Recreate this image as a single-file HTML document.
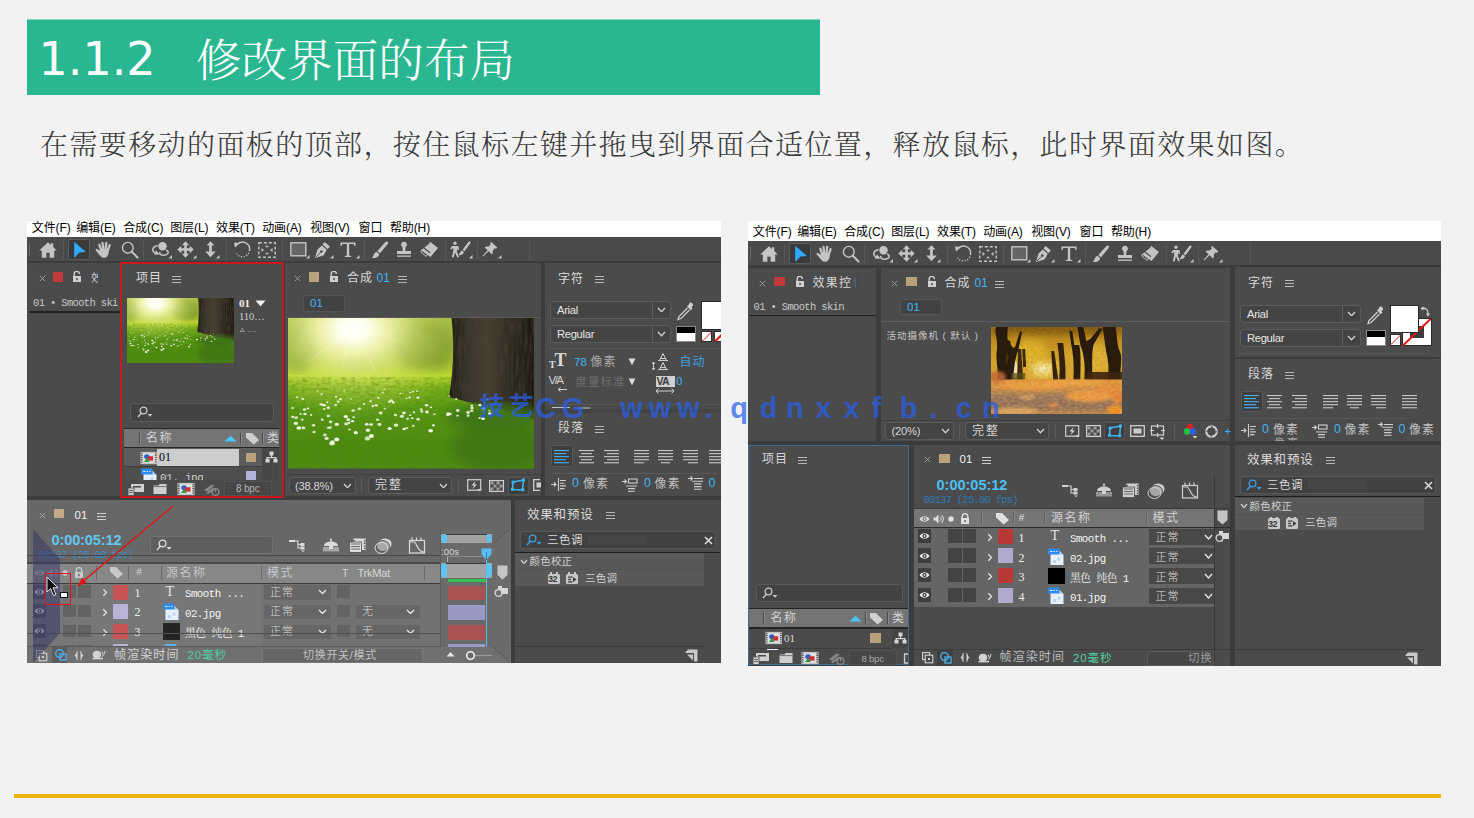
<!DOCTYPE html>
<html lang="zh-CN">
<head>
<meta charset="utf-8">
<title>1.1.2 修改界面的布局</title>
<style>
*{box-sizing:border-box;margin:0;padding:0}
html,body{width:1474px;height:818px;overflow:hidden;background:#f2f2f2}
body{position:relative;font-family:"Liberation Sans","Noto Sans CJK SC",sans-serif}
#banner{position:absolute;left:27px;top:20px;width:793px;height:75px;background:#2ab691;box-shadow:0 -1px 0 #8ed4c1}
#title{position:absolute;left:38.5px;top:27px;color:#fff;font-size:46px;line-height:64px;white-space:pre;font-family:"DejaVu Sans","Noto Serif CJK SC",serif}
#title .cn{font-family:"Liberation Serif","Noto Serif CJK SC",serif;font-size:45.6px;font-weight:300;margin-left:-3.5px;position:relative;top:1.5px}
#desc{position:absolute;left:40px;top:124px;color:#3a3a3a;font-weight:300;letter-spacing:1.4px;font-size:28px;line-height:44px;white-space:nowrap;font-family:"Liberation Serif","Noto Serif CJK SC",serif}
#rule{position:absolute;left:14px;top:794px;width:1427px;height:4px;background:#ebb50e}
.ae{position:absolute;background:#3c3c3c;overflow:hidden;font-size:11px;color:#c8c8c8}
.ae div,.ae svg{position:absolute;display:block}
.ae div{overflow:visible}
#L{left:27px;top:221px;width:694px;height:442px}
#R{left:748px;top:221px;width:693px;height:445px}
#wm{position:absolute;left:0;top:390.5px;width:1474px;height:34px;font-weight:bold;color:rgba(40,95,235,.74);font-family:"Liberation Sans","Noto Sans CJK SC",sans-serif}
#wm span{position:absolute;top:0;width:40px;text-align:center;line-height:34px;height:34px}
</style>
</head>
<body>
<div id="banner"></div>
<div id="title">1.1.2   <span class="cn">修改界面的布局</span></div>
<div id="desc">在需要移动的面板的顶部，按住鼠标左键并拖曳到界面合适位置，释放鼠标，此时界面效果如图。</div>
<div id="L" class="ae">
<div style="left:0px;top:0px;width:694px;height:442px;background:#3c3c3c;"></div>
<div style="left:0px;top:0px;width:694px;height:16px;background:#fff;"></div>
<div style="left:4.8px;top:-1.4px;height:16px;line-height:16px;font-size:12px;white-space:pre;color:#000;letter-spacing:-0.100px;">文件(F)</div>
<div style="left:49.2px;top:-1.4px;height:16px;line-height:16px;font-size:12px;white-space:pre;color:#000;letter-spacing:-0.100px;">编辑(E)</div>
<div style="left:96.2px;top:-1.4px;height:16px;line-height:16px;font-size:12px;white-space:pre;color:#000;letter-spacing:-0.100px;">合成(C)</div>
<div style="left:143.2px;top:-1.4px;height:16px;line-height:16px;font-size:12px;white-space:pre;color:#000;letter-spacing:-0.100px;">图层(L)</div>
<div style="left:189px;top:-1.4px;height:16px;line-height:16px;font-size:12px;white-space:pre;color:#000;letter-spacing:-0.100px;">效果(T)</div>
<div style="left:235.2px;top:-1.4px;height:16px;line-height:16px;font-size:12px;white-space:pre;color:#000;letter-spacing:-0.100px;">动画(A)</div>
<div style="left:283.2px;top:-1.4px;height:16px;line-height:16px;font-size:12px;white-space:pre;color:#000;letter-spacing:-0.100px;">视图(V)</div>
<div style="left:331.5px;top:-1.4px;height:16px;line-height:16px;font-size:12px;white-space:pre;color:#000;letter-spacing:-0.100px;">窗口</div>
<div style="left:362.9px;top:-1.4px;height:16px;line-height:16px;font-size:12px;white-space:pre;color:#000;letter-spacing:-0.100px;">帮助(H)</div>
<div style="left:0px;top:16px;width:694px;height:25px;background:#4a4a4a;"></div>
<div style="left:0px;top:40px;width:694px;height:2px;background:#3c3c3c;"></div>
<div style="left:2px;top:22px;width:1px;height:13px;background:#6a6a6a;"></div>
<div style="left:36px;top:19px;width:1px;height:20px;background:#565656;"></div>
<div style="left:116px;top:19px;width:1px;height:20px;background:#565656;"></div>
<div style="left:199px;top:19px;width:1px;height:20px;background:#565656;"></div>
<div style="left:254.5px;top:19px;width:1px;height:20px;background:#565656;"></div>
<div style="left:336.5px;top:19px;width:1px;height:20px;background:#565656;"></div>
<div style="left:417.5px;top:19px;width:1px;height:20px;background:#565656;"></div>
<div style="left:449.5px;top:19px;width:1px;height:20px;background:#565656;"></div>
<div style="left:501.5px;top:19px;width:1px;height:20px;background:#565656;"></div>
<svg style="left:12px;top:21px;" width="18" height="16" viewBox="0 0 18 16"><path d="M9 0.300 L11.800 2.900 V1.200 H14.200 V5.100 L17.800 8.500 H15.200 V15.700 H10.600 V10.800 H7.400 V15.700 H2.800 V8.500 H0.200 Z" fill="#c4c4c4"/></svg>
<div style="left:41px;top:18px;width:22px;height:21px;background:#3a3a3a;border:1px solid #5c5c5c;border-radius:2px;"></div>
<svg style="left:46px;top:20px;" width="14" height="18" viewBox="0 0 14 18"><path d="M1.2 0.8 L13 11 L6.5 11.6 L1.2 17 Z" fill="#31a8ff"/></svg>
<svg style="left:68px;top:20px;" width="18" height="18" viewBox="0 0 18 18"><g stroke="#c4c4c4" stroke-width="2.300" stroke-linecap="round"><path d="M6.200 9 L4.300 3.800 M8.300 8.500 L7.500 1.800 M10.600 8.500 L11.200 1.900 M12.700 9.500 L14.600 4.200"/><path d="M5 12.500 L1.800 9" stroke-width="2.400"/></g><path d="M4.600 8.500 H13.800 C14 13 12.500 16.800 9.200 16.800 C6.500 16.800 5 15 3.300 12 Z" fill="#c4c4c4"/></svg>
<svg style="left:93.5px;top:20px;" width="18" height="18" viewBox="0 0 18 18"><circle cx="6.8" cy="6.8" r="5.4" fill="none" stroke="#c4c4c4" stroke-width="1.4"/><path d="M10.8 10.8 L16.5 16.5" stroke="#c4c4c4" stroke-width="2" stroke-linecap="round"/></svg>
<svg style="left:123.5px;top:20px;" width="22" height="18" viewBox="0 0 22 18"><circle cx="11.5" cy="5.2" r="4.2" fill="#c4c4c4"/><path d="M6.5 4.5 C1 6 0.5 10 4 12" fill="none" stroke="#c4c4c4" stroke-width="1.5"/><path d="M3 13.8 L8.8 13.5 L5 9.6 Z" fill="#c4c4c4"/><path d="M15 9 C18 10 18.5 13.5 13 14.2 C10 14.5 8 13 9 11" fill="none" stroke="#c4c4c4" stroke-width="1.5"/><path d="M21 14 V17.5 H17.5 Z" fill="#c4c4c4"/></svg>
<svg style="left:150px;top:20px;" width="20" height="18" viewBox="0 0 20 18"><path d="M8.500 0.300 L12.200 4.300 H9.800 V7.200 H12.700 V4.800 L16.700 8.500 L12.700 12.200 V9.800 H9.800 V12.700 H12.200 L8.500 16.700 L4.800 12.700 H7.200 V9.800 H4.300 V12.200 L0.300 8.500 L4.300 4.800 V7.200 H7.200 V4.300 H4.800 Z" fill="#c4c4c4"/><path d="M19.500 14 V17.500 H16 Z" fill="#c4c4c4"/></svg>
<svg style="left:177px;top:20px;" width="16" height="18" viewBox="0 0 16 18"><path d="M6.500 0.300 L10.500 4.600 H7.900 V10.400 H11.800 L6.500 16.300 L1.200 10.400 H5.100 V4.600 H2.500 Z" fill="#c4c4c4"/><path d="M15.500 14 V17.500 H12 Z" fill="#c4c4c4"/></svg>
<svg style="left:205px;top:20px;" width="20" height="18" viewBox="0 0 20 18"><path d="M5 3.8 A7 7 0 0 1 17.5 9" fill="none" stroke="#c4c4c4" stroke-width="1.5"/><path d="M17.5 9 A7 7 0 0 1 4.5 12.5" fill="none" stroke="#c4c4c4" stroke-width="1.3" stroke-dasharray="1.2 1.6"/><path d="M2 1.5 L7.5 2 L3 6.8 Z" fill="#c4c4c4"/></svg>
<svg style="left:231px;top:21px;" width="18" height="16" viewBox="0 0 18 16"><rect x="0.8" y="0.8" width="16.4" height="14.4" fill="none" stroke="#c4c4c4" stroke-width="1.4" stroke-dasharray="3 2"/><path d="M3.500 6 L6 8 L3.500 10 Z M14.500 6 L12 8 L14.500 10 Z M7 3.800 L9 5.800 L11 3.800 Z M7 12.200 L9 10.200 L11 12.200 Z" fill="#c4c4c4"/></svg>
<svg style="left:263px;top:21px;" width="20" height="17" viewBox="0 0 20 17"><rect x="0.8" y="0.8" width="15" height="13" fill="#656565" stroke="#c4c4c4" stroke-width="1.4"/><path d="M19.5 13 V16.5 H16 Z" fill="#c4c4c4"/></svg>
<svg style="left:287px;top:20px;" width="20" height="18" viewBox="0 0 20 18"><path d="M10.5 1 L16 5.5 L13.5 8 L8.5 3.5 Z M7.8 4.4 L12.8 8.8 L9.5 14.5 L1 17 L3.5 8.5 Z" fill="#c4c4c4"/><circle cx="7.3" cy="10.6" r="1.3" fill="#4a4a4a"/><path d="M2 16 L6.6 11.3" stroke="#4a4a4a" stroke-width="0.9"/><path d="M19.5 14 V17.5 H16 Z" fill="#c4c4c4"/></svg>
<svg style="left:313px;top:21px;" width="20" height="17" viewBox="0 0 20 17"><path d="M0.5 0.5 H15.5 V4 H14.3 L13.8 2 H9.2 V13.5 L11.2 14 V15 H4.8 V14 L6.8 13.5 V2 H2.2 L1.7 4 H0.5 Z" fill="#c4c4c4"/><path d="M19.5 13 V16.5 H16 Z" fill="#c4c4c4"/></svg>
<svg style="left:344px;top:20px;" width="18" height="18" viewBox="0 0 18 18"><path d="M16.5 0.5 C17.5 1 17.3 2.2 16.5 3.2 L9 12.2 L6.3 10 L14 1.5 C15 0.5 16 0.2 16.5 0.5 Z M5.5 10.8 L8.2 13 C7.8 16 5 17.5 0.8 16.8 C2.8 15.5 2.5 12 5.5 10.8 Z" fill="#c4c4c4"/></svg>
<svg style="left:368px;top:20px;" width="18" height="18" viewBox="0 0 18 18"><path d="M9 0.8 A2.8 2.8 0 0 1 10.6 6 L10.2 10 H16 V13 H2 V10 H7.8 L7.4 6 A2.8 2.8 0 0 1 9 0.8 Z" fill="#c4c4c4"/><rect x="2" y="14.5" width="14" height="1.3" fill="#c4c4c4"/></svg>
<svg style="left:393px;top:20px;" width="19" height="18" viewBox="0 0 19 18"><path d="M10 0.8 L18 7 L10.5 16 L7.6 13.7 L14 6 L9.5 2.5 Z M9.5 2.5 L14 6 L7.6 13.7 L1.5 9 Z" fill="#c4c4c4"/><path d="M4 7 L10 11.8" stroke="#4a4a4a" stroke-width="1.1"/><path d="M1.5 9 L7.6 13.7 L6.2 15.4 L0.8 11 Z" fill="none" stroke="#c4c4c4" stroke-width="1"/></svg>
<svg style="left:423px;top:20px;" width="23" height="18" viewBox="0 0 23 18"><circle cx="5" cy="2.3" r="1.7" fill="#c4c4c4"/><path d="M2 5 H8.5 L9 9 L7.5 9.2 L7.2 6.8 L6.8 10.5 L9 16 L7.3 16.5 L5 11.5 L3.5 16.5 L1.8 16.2 L3.3 10 L3.2 6.8 L1.2 8.5 L0.3 7.4 Z" fill="#c4c4c4"/><path d="M20 0.5 C21 1 20.6 2 20 2.8 L14.5 10.2 L12.6 8.8 L18 1.5 C18.8 0.5 19.5 0.2 20 0.5 Z M12 9.5 L14 11 C13.5 13.5 11.5 14.5 8.5 14 C10 13 9.8 10.5 12 9.5 Z" fill="#c4c4c4"/><path d="M22.5 14 V17.5 H19 Z" fill="#c4c4c4"/></svg>
<svg style="left:455px;top:20px;" width="20" height="18" viewBox="0 0 20 18"><path d="M9 0.8 L15.5 6.8 L13.8 7.8 L12.6 7.2 L10.6 10 C11.2 11.5 10.8 12.6 10 13.4 L6.6 10.2 L1.2 15.4 L0.6 14.8 L5.6 9.2 L2.6 6.4 C3.6 5.4 4.8 5.2 6.2 5.8 L8.8 3.6 L8.2 2.4 Z" fill="#c4c4c4"/><path d="M19.5 14 V17.5 H16 Z" fill="#c4c4c4"/></svg>
<div style="left:0px;top:42px;width:93px;height:233px;background:#4b4b4b;"></div>
<svg style="left:11.5px;top:53.5px;" width="7" height="7" viewBox="0 0 7 7"><path d="M0.8 0.8 L6.2 6.2 M6.2 0.8 L0.8 6.2" stroke="#9a9a9a" stroke-width="1"/></svg>
<div style="left:26px;top:51px;width:10px;height:10px;background:#c23a3a;"></div>
<svg style="left:45px;top:50px;" width="10" height="11" viewBox="0 0 10 11"><path d="M2.2 5 V3 a2.6 2.6 0 0 1 5.2 0" fill="none" stroke="#cfcfcf" stroke-width="1.4"/><rect x="1" y="5" width="8" height="6" fill="#cfcfcf"/><rect x="4.3" y="7" width="1.4" height="2.2" fill="#4b4b4b"/></svg>
<div style="left:64px;top:49.5px;height:15px;line-height:15px;font-size:11px;white-space:pre;color:#d0d0d0;width:7px;overflow:hidden;">效</div>
<div style="left:73px;top:47px;width:1px;height:20px;background:#454545;"></div>
<div style="left:6px;top:74.5px;height:15px;line-height:15px;font-size:10.5px;white-space:pre;color:#c8c8c8;font-family:'Liberation Mono','Noto Serif CJK SC',monospace;letter-spacing:-0.650px;width:86px;overflow:hidden;">01 • Smooth ski</div>
<div style="left:2px;top:90px;width:91px;height:1.5px;background:#232323;"></div>
<div style="left:93px;top:42px;width:2px;height:235px;background:#c8191e;"></div>
<div style="left:255px;top:42px;width:2px;height:235px;background:#c8191e;"></div>
<div style="left:93px;top:40.5px;width:164px;height:2px;background:#c8191e;"></div>
<div style="left:93px;top:275px;width:164px;height:2px;background:#c8191e;"></div>
<div style="left:95px;top:42.5px;width:160px;height:232.5px;background:#4b4b4b;"></div>
<div style="left:109px;top:49px;height:17px;line-height:17px;font-size:12px;white-space:pre;color:#d8d8d8;letter-spacing:1px;">项目</div>
<div style="left:145px;top:54.5px;width:9px;height:1px;background:#b8b8b8;"></div>
<div style="left:145px;top:57.5px;width:9px;height:1px;background:#b8b8b8;"></div>
<div style="left:145px;top:60.5px;width:9px;height:1px;background:#b8b8b8;"></div>
<svg preserveAspectRatio="none" style="left:100px;top:77px;" width="107" height="65" viewBox="0 0 100 61"><defs>
<linearGradient id="gAt" x1="0" y1="0" x2="0" y2="1"><stop offset="0" stop-color="#9cb43c"/><stop offset="0.2" stop-color="#a4ba40"/><stop offset="0.32" stop-color="#b0cc34"/><stop offset="0.38" stop-color="#bcd82c"/><stop offset="0.46" stop-color="#7ab01c"/><stop offset="0.6" stop-color="#589818"/><stop offset="0.85" stop-color="#4a8a14"/><stop offset="1" stop-color="#4c8a16"/></linearGradient>
<radialGradient id="gBt" cx="0.265" cy="0.06" r="0.5" gradientTransform="scale(1 1.2)"><stop offset="0" stop-color="#ffffff"/><stop offset="0.12" stop-color="#fffff0"/><stop offset="0.28" stop-color="#f6f7b4" stop-opacity="0.9"/><stop offset="0.6" stop-color="#dce870" stop-opacity="0.45"/><stop offset="1" stop-color="#c0d850" stop-opacity="0"/></radialGradient>
<linearGradient id="gCt" x1="0" y1="0" x2="1" y2="0"><stop offset="0" stop-color="#1c180e"/><stop offset="0.2" stop-color="#38332a"/><stop offset="0.45" stop-color="#484234"/><stop offset="0.75" stop-color="#2c281c"/><stop offset="1" stop-color="#1c180e"/></linearGradient>
<linearGradient id="gDt" x1="0" y1="0" x2="0" y2="1"><stop offset="0" stop-color="#3c6a14" stop-opacity="0"/><stop offset="0.6" stop-color="#447a16" stop-opacity="0.9"/><stop offset="1" stop-color="#4c8818" stop-opacity="1"/></linearGradient>
<filter id="gFt" x="-5%" y="-5%" width="110%" height="110%"><feGaussianBlur stdDeviation="2.2"/></filter>
<filter id="gGt"><feGaussianBlur stdDeviation="0.25"/></filter>
<filter id="gNt" x="0" y="0" width="100%" height="100%"><feTurbulence type="fractalNoise" baseFrequency="0.5 0.9" numOctaves="2" seed="3"/><feColorMatrix type="matrix" values="0 0 0 0 0.1  0 0 0 0 0.25  0 0 0 0 0  0.9 0.9 0 0 -0.75"/></filter>
<filter id="gTt" x="0" y="0" width="100%" height="100%"><feTurbulence type="fractalNoise" baseFrequency="0.9 0.12" numOctaves="2" seed="5"/><feColorMatrix type="matrix" values="0 0 0 0 0.06  0 0 0 0 0.05  0 0 0 0 0.03  1.2 1.2 0 0 -0.95"/></filter>
<clipPath id="gKt"><path d="M66.500 0 H100 V41 C92 38 80 36 65.500 32 C67.500 20 67.500 10 66.500 0 Z"/></clipPath>
</defs>
<rect width="100" height="61" fill="url(#gAt)"/>
<g filter="url(#gFt)"><ellipse cx="55" cy="11" rx="13" ry="10" fill="#6e8c20" opacity="0.85"/><ellipse cx="4" cy="12" rx="8" ry="10" fill="#6e9024" opacity="0.85"/><ellipse cx="44" cy="6" rx="6" ry="5" fill="#8aa830" opacity="0.5"/><ellipse cx="30" cy="18" rx="10" ry="3" fill="#94ae34" opacity="0.6"/><ellipse cx="60" cy="17" rx="7" ry="4" fill="#6f8e22" opacity="0.6"/></g>
<rect width="100" height="61" fill="url(#gBt)"/>
<g stroke="#fffff0" stroke-width="0.35" opacity="0.3"><path d="M26.500 4 L8 18 M26.500 4 L22 20 M26.500 4 L36 22 M26.500 4 L44 9 M26.500 4 L16 14"/></g>
<rect y="24" width="100" height="37" filter="url(#gNt)" opacity="0.85"/>
<path d="M66.500 0 H100 V41 C92 38 80 36 65.500 32 C67.500 20 67.500 10 66.500 0 Z" fill="url(#gCt)"/>
<rect x="66" y="0" width="34" height="38" filter="url(#gTt)" clip-path="url(#gKt)" opacity="0.9"/>
<g filter="url(#gFt)"><ellipse cx="84" cy="40" rx="20" ry="5" fill="#3f7414" opacity="0.95"/><ellipse cx="86" cy="52" rx="20" ry="10" fill="#3c7212" opacity="0.7"/></g>
<g fill="#f6f8e8" filter="url(#gGt)"><ellipse cx="46.3" cy="39.8" rx="0.83" ry="0.61" opacity="0.87"/><ellipse cx="48.6" cy="40.8" rx="0.57" ry="0.42" opacity="0.88"/><ellipse cx="25.6" cy="32.8" rx="0.37" ry="0.28" opacity="0.95"/><ellipse cx="4.4" cy="44.6" rx="1.00" ry="0.74" opacity="0.99"/><ellipse cx="50.9" cy="43.7" rx="0.62" ry="0.46" opacity="0.75"/><ellipse cx="5.8" cy="41.2" rx="0.58" ry="0.43" opacity="0.81"/><ellipse cx="38.6" cy="30.3" rx="0.41" ry="0.30" opacity="0.96"/><ellipse cx="52.9" cy="41.0" rx="0.70" ry="0.51" opacity="0.92"/><ellipse cx="23.5" cy="39.9" rx="0.86" ry="0.63" opacity="1.00"/><ellipse cx="6.7" cy="37.1" rx="0.69" ry="0.51" opacity="0.85"/><ellipse cx="32.3" cy="48.8" rx="1.13" ry="0.83" opacity="0.75"/><ellipse cx="74.7" cy="35.6" rx="0.55" ry="0.41" opacity="1.00"/><ellipse cx="6.9" cy="38.9" rx="0.69" ry="0.51" opacity="0.94"/><ellipse cx="8.1" cy="36.7" rx="0.53" ry="0.39" opacity="0.99"/><ellipse cx="10.6" cy="46.2" rx="0.71" ry="0.53" opacity="0.78"/><ellipse cx="65.6" cy="31.6" rx="0.37" ry="0.28" opacity="0.89"/><ellipse cx="16.4" cy="39.7" rx="0.75" ry="0.55" opacity="0.78"/><ellipse cx="10.4" cy="43.5" rx="0.73" ry="0.54" opacity="0.80"/><ellipse cx="79.6" cy="36.7" rx="0.69" ry="0.51" opacity="0.83"/><ellipse cx="18.1" cy="50.2" rx="0.88" ry="0.65" opacity="0.91"/><ellipse cx="81.1" cy="32.9" rx="0.41" ry="0.30" opacity="0.81"/><ellipse cx="27.6" cy="46.6" rx="0.74" ry="0.55" opacity="0.77"/><ellipse cx="48.2" cy="32.6" rx="0.41" ry="0.31" opacity="0.90"/><ellipse cx="37.7" cy="38.5" rx="0.79" ry="0.59" opacity="0.87"/><ellipse cx="13.5" cy="35.0" rx="0.67" ry="0.49" opacity="0.95"/><ellipse cx="16.4" cy="36.4" rx="0.66" ry="0.49" opacity="0.99"/><ellipse cx="78.0" cy="35.3" rx="0.67" ry="0.50" opacity="0.90"/><ellipse cx="9.4" cy="39.3" rx="0.48" ry="0.36" opacity="0.99"/><ellipse cx="58.1" cy="36.2" rx="0.49" ry="0.37" opacity="0.96"/><ellipse cx="24.8" cy="42.5" rx="0.60" ry="0.44" opacity="0.93"/><ellipse cx="19.5" cy="31.9" rx="0.48" ry="0.36" opacity="0.96"/><ellipse cx="23.7" cy="42.9" rx="0.92" ry="0.68" opacity="0.80"/><ellipse cx="22.8" cy="29.4" rx="0.39" ry="0.29" opacity="0.77"/><ellipse cx="30.9" cy="34.9" rx="0.56" ry="0.42" opacity="0.78"/><ellipse cx="73.2" cy="38.3" rx="0.80" ry="0.59" opacity="0.91"/><ellipse cx="48.3" cy="44.6" rx="0.63" ry="0.46" opacity="0.76"/><ellipse cx="52.5" cy="29.7" rx="0.41" ry="0.30" opacity="0.93"/><ellipse cx="81.9" cy="37.6" rx="0.46" ry="0.34" opacity="0.89"/><ellipse cx="58.0" cy="45.7" rx="0.95" ry="0.70" opacity="0.98"/><ellipse cx="56.5" cy="38.1" rx="0.76" ry="0.56" opacity="0.97"/><ellipse cx="65.0" cy="39.2" rx="0.78" ry="0.58" opacity="0.89"/><ellipse cx="32.0" cy="43.1" rx="0.79" ry="0.58" opacity="0.90"/><ellipse cx="52.8" cy="32.3" rx="0.61" ry="0.45" opacity="0.97"/><ellipse cx="32.5" cy="45.5" rx="0.92" ry="0.68" opacity="0.90"/><ellipse cx="68.9" cy="39.6" rx="0.51" ry="0.37" opacity="0.94"/><ellipse cx="49.7" cy="30.2" rx="0.42" ry="0.31" opacity="0.81"/><ellipse cx="41.3" cy="44.8" rx="0.84" ry="0.62" opacity="0.98"/><ellipse cx="1.9" cy="36.5" rx="0.52" ry="0.38" opacity="0.92"/><ellipse cx="14.7" cy="35.4" rx="0.68" ry="0.50" opacity="0.91"/><ellipse cx="73.2" cy="39.6" rx="0.60" ry="0.44" opacity="0.92"/><ellipse cx="35.9" cy="35.4" rx="0.65" ry="0.48" opacity="0.98"/><ellipse cx="41.2" cy="33.9" rx="0.61" ry="0.45" opacity="0.96"/><ellipse cx="14.7" cy="36.9" rx="0.57" ry="0.42" opacity="0.82"/><ellipse cx="34.5" cy="35.7" rx="0.60" ry="0.44" opacity="0.87"/><ellipse cx="69.0" cy="37.5" rx="0.77" ry="0.57" opacity="0.86"/><ellipse cx="3.6" cy="32.1" rx="0.57" ry="0.42" opacity="0.76"/><ellipse cx="47.2" cy="45.0" rx="0.71" ry="0.53" opacity="0.95"/><ellipse cx="12.0" cy="29.6" rx="0.40" ry="0.29" opacity="0.76"/><ellipse cx="37.2" cy="43.2" rx="0.81" ry="0.60" opacity="0.91"/><ellipse cx="17.1" cy="44.4" rx="0.77" ry="0.57" opacity="0.79"/><ellipse cx="39.2" cy="28.9" rx="0.44" ry="0.32" opacity="0.79"/><ellipse cx="29.0" cy="36.8" rx="0.65" ry="0.48" opacity="0.88"/><ellipse cx="65.1" cy="38.8" rx="0.79" ry="0.58" opacity="0.77"/><ellipse cx="47.1" cy="38.5" rx="0.77" ry="0.57" opacity="0.95"/><ellipse cx="59.1" cy="43.5" rx="0.64" ry="0.47" opacity="0.97"/><ellipse cx="74.7" cy="37.6" rx="0.73" ry="0.54" opacity="0.84"/><ellipse cx="36.7" cy="32.4" rx="0.49" ry="0.36" opacity="0.94"/><ellipse cx="3.3" cy="40.4" rx="0.80" ry="0.59" opacity="0.77"/><ellipse cx="15.0" cy="47.4" rx="0.78" ry="0.58" opacity="0.79"/><ellipse cx="42.8" cy="34.2" rx="0.59" ry="0.44" opacity="0.96"/><ellipse cx="77.9" cy="40.5" rx="0.52" ry="0.39" opacity="0.81"/><ellipse cx="24.5" cy="41.2" rx="0.79" ry="0.58" opacity="0.91"/><ellipse cx="26.2" cy="41.8" rx="0.67" ry="0.49" opacity="0.96"/><ellipse cx="17.9" cy="50.8" rx="1.13" ry="0.84" opacity="0.88"/><ellipse cx="17.3" cy="42.1" rx="0.74" ry="0.55" opacity="0.88"/><ellipse cx="3.2" cy="42.7" rx="0.94" ry="0.69" opacity="0.88"/><ellipse cx="65.9" cy="38.9" rx="0.67" ry="0.49" opacity="0.87"/><ellipse cx="6.3" cy="44.6" rx="0.80" ry="0.59" opacity="0.85"/><ellipse cx="39.3" cy="36.7" rx="0.46" ry="0.34" opacity="0.86"/><ellipse cx="26.7" cy="40.2" rx="0.56" ry="0.41" opacity="0.90"/><ellipse cx="19.4" cy="35.3" rx="0.61" ry="0.45" opacity="0.83"/><ellipse cx="51.2" cy="38.2" rx="0.49" ry="0.36" opacity="0.93"/><ellipse cx="42.3" cy="33.6" rx="0.44" ry="0.32" opacity="0.80"/><ellipse cx="36.4" cy="41.2" rx="0.65" ry="0.48" opacity="0.85"/><ellipse cx="13.9" cy="41.2" rx="0.58" ry="0.43" opacity="0.91"/><ellipse cx="43.9" cy="43.4" rx="0.91" ry="0.67" opacity="0.90"/><ellipse cx="19.8" cy="49.2" rx="1.03" ry="0.76" opacity="0.98"/><ellipse cx="26.5" cy="37.5" rx="0.75" ry="0.56" opacity="0.80"/><ellipse cx="20.4" cy="33.9" rx="0.58" ry="0.43" opacity="0.81"/><ellipse cx="68.4" cy="32.8" rx="0.47" ry="0.34" opacity="0.95"/><ellipse cx="33.6" cy="33.7" rx="0.56" ry="0.42" opacity="0.75"/><ellipse cx="56.3" cy="35.4" rx="0.68" ry="0.50" opacity="0.99"/><ellipse cx="42.0" cy="33.4" rx="0.57" ry="0.42" opacity="0.88"/><ellipse cx="16.3" cy="44.5" rx="0.59" ry="0.44" opacity="0.78"/><ellipse cx="45.7" cy="30.6" rx="0.44" ry="0.32" opacity="0.89"/><ellipse cx="15.9" cy="34.2" rx="0.44" ry="0.32" opacity="0.96"/><ellipse cx="6.0" cy="32.8" rx="0.61" ry="0.45" opacity="0.87"/><ellipse cx="27.5" cy="46.4" rx="0.82" ry="0.61" opacity="0.88"/><ellipse cx="49.7" cy="39.4" rx="0.48" ry="0.35" opacity="0.93"/><ellipse cx="15.7" cy="48.8" rx="0.87" ry="0.64" opacity="0.85"/><ellipse cx="14.4" cy="35.3" rx="0.55" ry="0.41" opacity="0.75"/><ellipse cx="33.8" cy="43.2" rx="0.80" ry="0.59" opacity="0.88"/><ellipse cx="74.8" cy="36.5" rx="0.66" ry="0.49" opacity="0.94"/><ellipse cx="33.9" cy="47.8" rx="1.07" ry="0.79" opacity="0.92"/><ellipse cx="59.5" cy="39.0" rx="0.49" ry="0.36" opacity="0.84"/><ellipse cx="1.9" cy="40.1" rx="0.62" ry="0.46" opacity="0.91"/><ellipse cx="19.8" cy="43.1" rx="0.94" ry="0.69" opacity="0.92"/><ellipse cx="54.4" cy="37.9" rx="0.64" ry="0.47" opacity="0.88"/><ellipse cx="82.0" cy="38.7" rx="0.69" ry="0.51" opacity="0.93"/><ellipse cx="50.8" cy="29.8" rx="0.47" ry="0.35" opacity="0.81"/><ellipse cx="5.1" cy="38.9" rx="0.53" ry="0.39" opacity="0.84"/><ellipse cx="21.3" cy="32.9" rx="0.60" ry="0.44" opacity="0.89"/><ellipse cx="79.3" cy="40.8" rx="0.72" ry="0.53" opacity="1.00"/><ellipse cx="49.4" cy="32.2" rx="0.54" ry="0.40" opacity="0.76"/><ellipse cx="50.5" cy="40.6" rx="0.51" ry="0.38" opacity="0.99"/><ellipse cx="43.7" cy="39.3" rx="0.69" ry="0.51" opacity="0.84"/><ellipse cx="54.1" cy="37.0" rx="0.62" ry="0.45" opacity="0.82"/><ellipse cx="25.0" cy="45.2" rx="0.58" ry="0.43" opacity="0.81"/><ellipse cx="13.7" cy="30.9" rx="0.50" ry="0.37" opacity="0.85"/></g></svg>
<div style="left:212px;top:74.5px;height:15px;line-height:15px;font-size:11px;white-space:pre;color:#f0f0f0;font-family:'Liberation Serif','Noto Serif CJK SC',serif;font-weight:bold;">01</div>
<svg style="left:228px;top:79px;" width="11" height="7" viewBox="0 0 11 7"><path d="M0.5 0.5 H10.5 L5.5 6.5 Z" fill="#f0f0f0"/></svg>
<div style="left:212px;top:87.5px;height:15px;line-height:15px;font-size:10.5px;white-space:pre;color:#cfcfcf;font-family:'Liberation Serif','Noto Serif CJK SC',serif;">110…</div>
<div style="left:213px;top:101.5px;height:13px;line-height:13px;font-size:9px;white-space:pre;color:#bdbdbd;font-family:'Liberation Serif','Noto Serif CJK SC',serif;">▵ …</div>
<div style="left:102.5px;top:181.5px;width:144px;height:19px;background:#434343;border:1px solid #595959;border-radius:3px;"></div>
<svg style="left:110px;top:185px;" width="16" height="12" viewBox="0 0 16 12"><circle cx="6.5" cy="4.5" r="3.4" fill="none" stroke="#c8c8c8" stroke-width="1.3"/><path d="M4.3 7.3 L1 11" stroke="#c8c8c8" stroke-width="1.4"/><path d="M10.5 8 H15.5 L13 10.8 Z" fill="#c8c8c8"/></svg>
<div style="left:97px;top:206.5px;width:155px;height:1.5px;background:#242424;"></div>
<div style="left:97px;top:208px;width:155px;height:18px;background:#747474;"></div>
<div style="left:112px;top:212px;width:1px;height:11px;background:#4a4a4a;"></div>
<div style="left:113px;top:212px;width:1px;height:11px;background:#8a8a8a;"></div>
<div style="left:119px;top:209px;height:17px;line-height:17px;font-size:12px;white-space:pre;color:#d2d2d2;letter-spacing:1.5px;">名称</div>
<svg style="left:197px;top:214px;" width="13" height="7" viewBox="0 0 13 7"><path d="M0.300 6.500 L6.500 0.800 L12.700 6.500 Z" fill="#48c4fa"/></svg>
<div style="left:213px;top:212px;width:1px;height:11px;background:#4a4a4a;"></div>
<div style="left:214px;top:212px;width:1px;height:11px;background:#8a8a8a;"></div>
<svg style="left:218px;top:211px;" width="15" height="13" viewBox="0 0 15 13"><path d="M1 1 H7 L14 8 L8.6 12.5 L1 5.5 Z" fill="#d0d0d0"/></svg>
<div style="left:235px;top:212px;width:1px;height:11px;background:#4a4a4a;"></div>
<div style="left:236px;top:212px;width:1px;height:11px;background:#8a8a8a;"></div>
<div style="left:240px;top:209px;height:17px;line-height:17px;font-size:12px;white-space:pre;color:#d2d2d2;">类</div>
<div style="left:97px;top:226px;width:155px;height:1px;background:#242424;"></div>
<div style="left:97px;top:227px;width:138px;height:18px;background:#5c5c5c;"></div>
<div style="left:235px;top:227px;width:17px;height:32px;background:#474747;"></div>
<svg preserveAspectRatio="none" style="left:113px;top:229.5px;" width="17.5" height="14" viewBox="0 0 18 16"><rect x="0.5" y="1" width="17" height="14" fill="#c4c4c4"/><rect x="3" y="2.5" width="12" height="11" fill="#e2e2e2"/><path d="M1 2.500 H2.500 M1 5 H2.500 M1 7.500 H2.500 M1 10 H2.500 M1 12.500 H2.500 M15.500 2.500 H17 M15.500 5 H17 M15.500 7.500 H17 M15.500 10 H17 M15.500 12.500 H17" stroke="#555" stroke-width="1.200"/><circle cx="7" cy="6.500" r="2.800" fill="#2a62c8"/><rect x="8" y="6" width="5.500" height="5" fill="#d03030"/><path d="M4 12.500 L7 8 L10 12.500 Z" fill="#2a9a3a"/></svg>
<div style="left:130px;top:227.5px;width:82px;height:17.5px;background:#cdcdcd;"></div>
<div style="left:132px;top:228px;height:17px;line-height:17px;font-size:12px;white-space:pre;color:#000;font-family:'Liberation Serif','Noto Serif CJK SC',serif;">01</div>
<div style="left:219px;top:231.5px;width:10px;height:9.5px;background:#b8a27c;"></div>
<svg style="left:238px;top:230px;" width="13" height="12" viewBox="0 0 13 12"><path d="M4.5 0.5 H8.5 V4.5 H7 V6 H11.5 V8 H12.5 V11.5 H8.5 V8 H10 V7.2 H3 V8 H4.500 V11.5 H0.5 V8 H1.5 V6 H6 V4.500 H4.500 Z" fill="#d6d6d6"/></svg>
<div style="left:97px;top:245px;width:138px;height:1px;background:#3f3f3f;"></div>
<div style="left:97px;top:246px;width:138px;height:13px;background:#4e4e4e;"></div>
<svg style="left:114px;top:247px;" width="17" height="12" viewBox="0 0 17 12"><path d="M2.500 2.500 H11 L15.500 7 V17.500 H2.500 Z" fill="#e6f1fb"/><path d="M11 2.500 L15.500 7 H11 Z" fill="#b4cfe8"/><rect x="0" y="0.500" width="11.500" height="6" rx="1.200" fill="#2d8ceb"/><path d="M2 3.500 H4.500 M5.500 3.500 H7 M8 3.500 H9.500" stroke="#cfe6ff" stroke-width="1.100"/><path d="M5 12 H8 V15 H5 Z M9.500 9.500 H12.500 V12.500 H9.500 Z" fill="#bcd8f2"/></svg>
<div style="left:133px;top:249.5px;height:15px;line-height:15px;font-size:11px;white-space:pre;color:#cfcfcf;font-family:'Liberation Mono','Noto Serif CJK SC',monospace;letter-spacing:-0.4px;height:9px;overflow:hidden;line-height:15px;">01. jpg</div>
<div style="left:219px;top:250px;width:10px;height:9px;background:#b4b2d8;"></div>
<div style="left:95px;top:259px;width:160px;height:16px;background:#4b4b4b;"></div>
<svg style="left:100px;top:262px;" width="18" height="13" viewBox="0 0 18 13"><rect x="4" y="1" width="13" height="8" fill="#cfcfcf"/><rect x="6" y="3" width="8" height="1.5" fill="#4b4b4b"/><rect x="1" y="5" width="6" height="7.5" fill="#cfcfcf" stroke="#4b4b4b" stroke-width="0.8"/><path d="M2 7.5 H6 M2 9.5 H6" stroke="#4b4b4b" stroke-width="0.8"/></svg>
<svg style="left:126px;top:262px;" width="15" height="12" viewBox="0 0 15 12"><path d="M0.5 2.500 H5.5 L6.5 1 H13.500 V11 H0.500 Z" fill="#cfcfcf"/><path d="M0.5 3.6 H13.5" stroke="#4b4b4b" stroke-width="0.7"/></svg>
<svg preserveAspectRatio="none" style="left:150px;top:261px;" width="18" height="14" viewBox="0 0 18 16"><rect x="0.5" y="1" width="17" height="14" fill="#c4c4c4"/><rect x="3" y="2.5" width="12" height="11" fill="#e2e2e2"/><path d="M1 2.500 H2.500 M1 5 H2.500 M1 7.500 H2.500 M1 10 H2.500 M1 12.500 H2.500 M15.500 2.500 H17 M15.500 5 H17 M15.500 7.500 H17 M15.500 10 H17 M15.500 12.500 H17" stroke="#555" stroke-width="1.200"/><circle cx="7" cy="6.500" r="2.800" fill="#2a62c8"/><rect x="8" y="6" width="5.500" height="5" fill="#d03030"/><path d="M4 12.500 L7 8 L10 12.500 Z" fill="#2a9a3a"/></svg>
<svg style="left:176px;top:262px;" width="18" height="14" viewBox="0 0 18 14"><path d="M1 7 L9 1.500 L11.500 2.500 L4 8.500 Z M3 10 L10.500 4.500 L11.500 7 L5 11 Z" fill="#8a8a8a"/><circle cx="12.5" cy="9" r="3.300" fill="none" stroke="#8a8a8a" stroke-width="1.3"/><rect x="11.900" y="5" width="1.3" height="4" fill="#8a8a8a"/></svg>
<div style="left:197px;top:260px;width:48px;height:15px;background:#464646;border:1px solid #525252;"></div>
<div style="left:209px;top:261px;height:14px;line-height:14px;font-size:10px;white-space:pre;color:#b4b4b4;letter-spacing:-0.2px;">8 bpc</div>
<div style="left:258px;top:42px;width:255.5px;height:233px;background:#4b4b4b;"></div>
<svg style="left:266.5px;top:54px;" width="7" height="7" viewBox="0 0 7 7"><path d="M0.8 0.8 L6.2 6.2 M6.2 0.8 L0.8 6.2" stroke="#9a9a9a" stroke-width="1"/></svg>
<div style="left:282px;top:51px;width:10px;height:10px;background:#b8a27c;"></div>
<svg style="left:302px;top:50px;" width="10" height="11" viewBox="0 0 10 11"><path d="M2.2 5 V3 a2.6 2.6 0 0 1 5.2 0" fill="none" stroke="#cfcfcf" stroke-width="1.4"/><rect x="1" y="5" width="8" height="6" fill="#cfcfcf"/><rect x="4.3" y="7" width="1.4" height="2.2" fill="#4b4b4b"/></svg>
<div style="left:320px;top:49px;height:17px;line-height:17px;font-size:12px;white-space:pre;color:#d8d8d8;letter-spacing:1px;">合成</div>
<div style="left:349.5px;top:49px;height:17px;line-height:17px;font-size:12px;white-space:pre;color:#3db4f5;">01</div>
<div style="left:371px;top:54.5px;width:9px;height:1px;background:#b8b8b8;"></div>
<div style="left:371px;top:57.5px;width:9px;height:1px;background:#b8b8b8;"></div>
<div style="left:371px;top:60.5px;width:9px;height:1px;background:#b8b8b8;"></div>
<div style="left:276px;top:74px;width:41.5px;height:16.5px;background:#424242;border:1px solid #555;border-radius:2px;"></div>
<div style="left:283px;top:74px;height:16px;line-height:16px;font-size:11.5px;white-space:pre;color:#3db4f5;">01</div>
<div style="left:258px;top:96px;width:255.5px;height:1px;background:#5a5a5a;"></div>
<svg preserveAspectRatio="none" style="left:261px;top:97px;" width="246" height="150.5" viewBox="0 0 100 61"><defs>
<linearGradient id="gAm" x1="0" y1="0" x2="0" y2="1"><stop offset="0" stop-color="#9cb43c"/><stop offset="0.2" stop-color="#a4ba40"/><stop offset="0.32" stop-color="#b0cc34"/><stop offset="0.38" stop-color="#bcd82c"/><stop offset="0.46" stop-color="#7ab01c"/><stop offset="0.6" stop-color="#589818"/><stop offset="0.85" stop-color="#4a8a14"/><stop offset="1" stop-color="#4c8a16"/></linearGradient>
<radialGradient id="gBm" cx="0.265" cy="0.06" r="0.5" gradientTransform="scale(1 1.2)"><stop offset="0" stop-color="#ffffff"/><stop offset="0.12" stop-color="#fffff0"/><stop offset="0.28" stop-color="#f6f7b4" stop-opacity="0.9"/><stop offset="0.6" stop-color="#dce870" stop-opacity="0.45"/><stop offset="1" stop-color="#c0d850" stop-opacity="0"/></radialGradient>
<linearGradient id="gCm" x1="0" y1="0" x2="1" y2="0"><stop offset="0" stop-color="#1c180e"/><stop offset="0.2" stop-color="#38332a"/><stop offset="0.45" stop-color="#484234"/><stop offset="0.75" stop-color="#2c281c"/><stop offset="1" stop-color="#1c180e"/></linearGradient>
<linearGradient id="gDm" x1="0" y1="0" x2="0" y2="1"><stop offset="0" stop-color="#3c6a14" stop-opacity="0"/><stop offset="0.6" stop-color="#447a16" stop-opacity="0.9"/><stop offset="1" stop-color="#4c8818" stop-opacity="1"/></linearGradient>
<filter id="gFm" x="-5%" y="-5%" width="110%" height="110%"><feGaussianBlur stdDeviation="2.2"/></filter>
<filter id="gGm"><feGaussianBlur stdDeviation="0.25"/></filter>
<filter id="gNm" x="0" y="0" width="100%" height="100%"><feTurbulence type="fractalNoise" baseFrequency="0.5 0.9" numOctaves="2" seed="3"/><feColorMatrix type="matrix" values="0 0 0 0 0.1  0 0 0 0 0.25  0 0 0 0 0  0.9 0.9 0 0 -0.75"/></filter>
<filter id="gTm" x="0" y="0" width="100%" height="100%"><feTurbulence type="fractalNoise" baseFrequency="0.9 0.12" numOctaves="2" seed="5"/><feColorMatrix type="matrix" values="0 0 0 0 0.06  0 0 0 0 0.05  0 0 0 0 0.03  1.2 1.2 0 0 -0.95"/></filter>
<clipPath id="gKm"><path d="M66.500 0 H100 V41 C92 38 80 36 65.500 32 C67.500 20 67.500 10 66.500 0 Z"/></clipPath>
</defs>
<rect width="100" height="61" fill="url(#gAm)"/>
<g filter="url(#gFm)"><ellipse cx="55" cy="11" rx="13" ry="10" fill="#6e8c20" opacity="0.85"/><ellipse cx="4" cy="12" rx="8" ry="10" fill="#6e9024" opacity="0.85"/><ellipse cx="44" cy="6" rx="6" ry="5" fill="#8aa830" opacity="0.5"/><ellipse cx="30" cy="18" rx="10" ry="3" fill="#94ae34" opacity="0.6"/><ellipse cx="60" cy="17" rx="7" ry="4" fill="#6f8e22" opacity="0.6"/></g>
<rect width="100" height="61" fill="url(#gBm)"/>
<g stroke="#fffff0" stroke-width="0.35" opacity="0.3"><path d="M26.500 4 L8 18 M26.500 4 L22 20 M26.500 4 L36 22 M26.500 4 L44 9 M26.500 4 L16 14"/></g>
<rect y="24" width="100" height="37" filter="url(#gNm)" opacity="0.85"/>
<path d="M66.500 0 H100 V41 C92 38 80 36 65.500 32 C67.500 20 67.500 10 66.500 0 Z" fill="url(#gCm)"/>
<rect x="66" y="0" width="34" height="38" filter="url(#gTm)" clip-path="url(#gKm)" opacity="0.9"/>
<g filter="url(#gFm)"><ellipse cx="84" cy="40" rx="20" ry="5" fill="#3f7414" opacity="0.95"/><ellipse cx="86" cy="52" rx="20" ry="10" fill="#3c7212" opacity="0.7"/></g>
<g fill="#f6f8e8" filter="url(#gGm)"><ellipse cx="46.3" cy="39.8" rx="0.83" ry="0.61" opacity="0.87"/><ellipse cx="48.6" cy="40.8" rx="0.57" ry="0.42" opacity="0.88"/><ellipse cx="25.6" cy="32.8" rx="0.37" ry="0.28" opacity="0.95"/><ellipse cx="4.4" cy="44.6" rx="1.00" ry="0.74" opacity="0.99"/><ellipse cx="50.9" cy="43.7" rx="0.62" ry="0.46" opacity="0.75"/><ellipse cx="5.8" cy="41.2" rx="0.58" ry="0.43" opacity="0.81"/><ellipse cx="38.6" cy="30.3" rx="0.41" ry="0.30" opacity="0.96"/><ellipse cx="52.9" cy="41.0" rx="0.70" ry="0.51" opacity="0.92"/><ellipse cx="23.5" cy="39.9" rx="0.86" ry="0.63" opacity="1.00"/><ellipse cx="6.7" cy="37.1" rx="0.69" ry="0.51" opacity="0.85"/><ellipse cx="32.3" cy="48.8" rx="1.13" ry="0.83" opacity="0.75"/><ellipse cx="74.7" cy="35.6" rx="0.55" ry="0.41" opacity="1.00"/><ellipse cx="6.9" cy="38.9" rx="0.69" ry="0.51" opacity="0.94"/><ellipse cx="8.1" cy="36.7" rx="0.53" ry="0.39" opacity="0.99"/><ellipse cx="10.6" cy="46.2" rx="0.71" ry="0.53" opacity="0.78"/><ellipse cx="65.6" cy="31.6" rx="0.37" ry="0.28" opacity="0.89"/><ellipse cx="16.4" cy="39.7" rx="0.75" ry="0.55" opacity="0.78"/><ellipse cx="10.4" cy="43.5" rx="0.73" ry="0.54" opacity="0.80"/><ellipse cx="79.6" cy="36.7" rx="0.69" ry="0.51" opacity="0.83"/><ellipse cx="18.1" cy="50.2" rx="0.88" ry="0.65" opacity="0.91"/><ellipse cx="81.1" cy="32.9" rx="0.41" ry="0.30" opacity="0.81"/><ellipse cx="27.6" cy="46.6" rx="0.74" ry="0.55" opacity="0.77"/><ellipse cx="48.2" cy="32.6" rx="0.41" ry="0.31" opacity="0.90"/><ellipse cx="37.7" cy="38.5" rx="0.79" ry="0.59" opacity="0.87"/><ellipse cx="13.5" cy="35.0" rx="0.67" ry="0.49" opacity="0.95"/><ellipse cx="16.4" cy="36.4" rx="0.66" ry="0.49" opacity="0.99"/><ellipse cx="78.0" cy="35.3" rx="0.67" ry="0.50" opacity="0.90"/><ellipse cx="9.4" cy="39.3" rx="0.48" ry="0.36" opacity="0.99"/><ellipse cx="58.1" cy="36.2" rx="0.49" ry="0.37" opacity="0.96"/><ellipse cx="24.8" cy="42.5" rx="0.60" ry="0.44" opacity="0.93"/><ellipse cx="19.5" cy="31.9" rx="0.48" ry="0.36" opacity="0.96"/><ellipse cx="23.7" cy="42.9" rx="0.92" ry="0.68" opacity="0.80"/><ellipse cx="22.8" cy="29.4" rx="0.39" ry="0.29" opacity="0.77"/><ellipse cx="30.9" cy="34.9" rx="0.56" ry="0.42" opacity="0.78"/><ellipse cx="73.2" cy="38.3" rx="0.80" ry="0.59" opacity="0.91"/><ellipse cx="48.3" cy="44.6" rx="0.63" ry="0.46" opacity="0.76"/><ellipse cx="52.5" cy="29.7" rx="0.41" ry="0.30" opacity="0.93"/><ellipse cx="81.9" cy="37.6" rx="0.46" ry="0.34" opacity="0.89"/><ellipse cx="58.0" cy="45.7" rx="0.95" ry="0.70" opacity="0.98"/><ellipse cx="56.5" cy="38.1" rx="0.76" ry="0.56" opacity="0.97"/><ellipse cx="65.0" cy="39.2" rx="0.78" ry="0.58" opacity="0.89"/><ellipse cx="32.0" cy="43.1" rx="0.79" ry="0.58" opacity="0.90"/><ellipse cx="52.8" cy="32.3" rx="0.61" ry="0.45" opacity="0.97"/><ellipse cx="32.5" cy="45.5" rx="0.92" ry="0.68" opacity="0.90"/><ellipse cx="68.9" cy="39.6" rx="0.51" ry="0.37" opacity="0.94"/><ellipse cx="49.7" cy="30.2" rx="0.42" ry="0.31" opacity="0.81"/><ellipse cx="41.3" cy="44.8" rx="0.84" ry="0.62" opacity="0.98"/><ellipse cx="1.9" cy="36.5" rx="0.52" ry="0.38" opacity="0.92"/><ellipse cx="14.7" cy="35.4" rx="0.68" ry="0.50" opacity="0.91"/><ellipse cx="73.2" cy="39.6" rx="0.60" ry="0.44" opacity="0.92"/><ellipse cx="35.9" cy="35.4" rx="0.65" ry="0.48" opacity="0.98"/><ellipse cx="41.2" cy="33.9" rx="0.61" ry="0.45" opacity="0.96"/><ellipse cx="14.7" cy="36.9" rx="0.57" ry="0.42" opacity="0.82"/><ellipse cx="34.5" cy="35.7" rx="0.60" ry="0.44" opacity="0.87"/><ellipse cx="69.0" cy="37.5" rx="0.77" ry="0.57" opacity="0.86"/><ellipse cx="3.6" cy="32.1" rx="0.57" ry="0.42" opacity="0.76"/><ellipse cx="47.2" cy="45.0" rx="0.71" ry="0.53" opacity="0.95"/><ellipse cx="12.0" cy="29.6" rx="0.40" ry="0.29" opacity="0.76"/><ellipse cx="37.2" cy="43.2" rx="0.81" ry="0.60" opacity="0.91"/><ellipse cx="17.1" cy="44.4" rx="0.77" ry="0.57" opacity="0.79"/><ellipse cx="39.2" cy="28.9" rx="0.44" ry="0.32" opacity="0.79"/><ellipse cx="29.0" cy="36.8" rx="0.65" ry="0.48" opacity="0.88"/><ellipse cx="65.1" cy="38.8" rx="0.79" ry="0.58" opacity="0.77"/><ellipse cx="47.1" cy="38.5" rx="0.77" ry="0.57" opacity="0.95"/><ellipse cx="59.1" cy="43.5" rx="0.64" ry="0.47" opacity="0.97"/><ellipse cx="74.7" cy="37.6" rx="0.73" ry="0.54" opacity="0.84"/><ellipse cx="36.7" cy="32.4" rx="0.49" ry="0.36" opacity="0.94"/><ellipse cx="3.3" cy="40.4" rx="0.80" ry="0.59" opacity="0.77"/><ellipse cx="15.0" cy="47.4" rx="0.78" ry="0.58" opacity="0.79"/><ellipse cx="42.8" cy="34.2" rx="0.59" ry="0.44" opacity="0.96"/><ellipse cx="77.9" cy="40.5" rx="0.52" ry="0.39" opacity="0.81"/><ellipse cx="24.5" cy="41.2" rx="0.79" ry="0.58" opacity="0.91"/><ellipse cx="26.2" cy="41.8" rx="0.67" ry="0.49" opacity="0.96"/><ellipse cx="17.9" cy="50.8" rx="1.13" ry="0.84" opacity="0.88"/><ellipse cx="17.3" cy="42.1" rx="0.74" ry="0.55" opacity="0.88"/><ellipse cx="3.2" cy="42.7" rx="0.94" ry="0.69" opacity="0.88"/><ellipse cx="65.9" cy="38.9" rx="0.67" ry="0.49" opacity="0.87"/><ellipse cx="6.3" cy="44.6" rx="0.80" ry="0.59" opacity="0.85"/><ellipse cx="39.3" cy="36.7" rx="0.46" ry="0.34" opacity="0.86"/><ellipse cx="26.7" cy="40.2" rx="0.56" ry="0.41" opacity="0.90"/><ellipse cx="19.4" cy="35.3" rx="0.61" ry="0.45" opacity="0.83"/><ellipse cx="51.2" cy="38.2" rx="0.49" ry="0.36" opacity="0.93"/><ellipse cx="42.3" cy="33.6" rx="0.44" ry="0.32" opacity="0.80"/><ellipse cx="36.4" cy="41.2" rx="0.65" ry="0.48" opacity="0.85"/><ellipse cx="13.9" cy="41.2" rx="0.58" ry="0.43" opacity="0.91"/><ellipse cx="43.9" cy="43.4" rx="0.91" ry="0.67" opacity="0.90"/><ellipse cx="19.8" cy="49.2" rx="1.03" ry="0.76" opacity="0.98"/><ellipse cx="26.5" cy="37.5" rx="0.75" ry="0.56" opacity="0.80"/><ellipse cx="20.4" cy="33.9" rx="0.58" ry="0.43" opacity="0.81"/><ellipse cx="68.4" cy="32.8" rx="0.47" ry="0.34" opacity="0.95"/><ellipse cx="33.6" cy="33.7" rx="0.56" ry="0.42" opacity="0.75"/><ellipse cx="56.3" cy="35.4" rx="0.68" ry="0.50" opacity="0.99"/><ellipse cx="42.0" cy="33.4" rx="0.57" ry="0.42" opacity="0.88"/><ellipse cx="16.3" cy="44.5" rx="0.59" ry="0.44" opacity="0.78"/><ellipse cx="45.7" cy="30.6" rx="0.44" ry="0.32" opacity="0.89"/><ellipse cx="15.9" cy="34.2" rx="0.44" ry="0.32" opacity="0.96"/><ellipse cx="6.0" cy="32.8" rx="0.61" ry="0.45" opacity="0.87"/><ellipse cx="27.5" cy="46.4" rx="0.82" ry="0.61" opacity="0.88"/><ellipse cx="49.7" cy="39.4" rx="0.48" ry="0.35" opacity="0.93"/><ellipse cx="15.7" cy="48.8" rx="0.87" ry="0.64" opacity="0.85"/><ellipse cx="14.4" cy="35.3" rx="0.55" ry="0.41" opacity="0.75"/><ellipse cx="33.8" cy="43.2" rx="0.80" ry="0.59" opacity="0.88"/><ellipse cx="74.8" cy="36.5" rx="0.66" ry="0.49" opacity="0.94"/><ellipse cx="33.9" cy="47.8" rx="1.07" ry="0.79" opacity="0.92"/><ellipse cx="59.5" cy="39.0" rx="0.49" ry="0.36" opacity="0.84"/><ellipse cx="1.9" cy="40.1" rx="0.62" ry="0.46" opacity="0.91"/><ellipse cx="19.8" cy="43.1" rx="0.94" ry="0.69" opacity="0.92"/><ellipse cx="54.4" cy="37.9" rx="0.64" ry="0.47" opacity="0.88"/><ellipse cx="82.0" cy="38.7" rx="0.69" ry="0.51" opacity="0.93"/><ellipse cx="50.8" cy="29.8" rx="0.47" ry="0.35" opacity="0.81"/><ellipse cx="5.1" cy="38.9" rx="0.53" ry="0.39" opacity="0.84"/><ellipse cx="21.3" cy="32.9" rx="0.60" ry="0.44" opacity="0.89"/><ellipse cx="79.3" cy="40.8" rx="0.72" ry="0.53" opacity="1.00"/><ellipse cx="49.4" cy="32.2" rx="0.54" ry="0.40" opacity="0.76"/><ellipse cx="50.5" cy="40.6" rx="0.51" ry="0.38" opacity="0.99"/><ellipse cx="43.7" cy="39.3" rx="0.69" ry="0.51" opacity="0.84"/><ellipse cx="54.1" cy="37.0" rx="0.62" ry="0.45" opacity="0.82"/><ellipse cx="25.0" cy="45.2" rx="0.58" ry="0.43" opacity="0.81"/><ellipse cx="13.7" cy="30.9" rx="0.50" ry="0.37" opacity="0.85"/></g></svg>
<div style="left:258px;top:253px;width:255.5px;height:1px;background:#414141;"></div>
<div style="left:262px;top:255.5px;width:67px;height:17.5px;background:#444444;border:1px solid #5b5b5b;border-radius:3px;"></div>
<div style="left:268px;top:256.55px;height:16px;line-height:16px;font-size:11.2px;white-space:pre;color:#d6d6d6;letter-spacing:-0.200px;">(38.8%)</div>
<svg style="left:316px;top:261.6px;" width="9" height="5.8" viewBox="0 0 9 5.8"><path d="M1 1 L4.5 4.8 L8 1" fill="none" stroke="#d0d0d0" stroke-width="1.3"/></svg>
<div style="left:334px;top:257px;width:1px;height:15px;background:#5c5c5c;"></div>
<div style="left:340.5px;top:255.5px;width:84.5px;height:17.5px;background:#444444;border:1px solid #5b5b5b;border-radius:3px;"></div>
<div style="left:348px;top:256.05px;height:17px;line-height:17px;font-size:12px;white-space:pre;color:#d6d6d6;letter-spacing:2px;">完整</div>
<svg style="left:411.5px;top:261.6px;" width="9" height="5.8" viewBox="0 0 9 5.8"><path d="M1 1 L4.5 4.8 L8 1" fill="none" stroke="#d0d0d0" stroke-width="1.3"/></svg>
<div style="left:430.5px;top:257px;width:1px;height:15px;background:#5c5c5c;"></div>
<svg style="left:440px;top:258px;" width="15" height="13" viewBox="0 0 15 13"><rect x="0.700" y="0.700" width="13" height="10.500" fill="none" stroke="#d0d0d0" stroke-width="1.2"/><path d="M8.500 2 L4.500 6.500 H7 L5.500 10 L10 5.500 H7.500 Z" fill="#d0d0d0"/><path d="M10.500 10 H14.500 L12.500 12.500 Z" fill="#d0d0d0"/></svg>
<svg style="left:461.5px;top:258.5px;" width="15" height="12" viewBox="0 0 15 12"><rect x="0.600" y="0.600" width="13.800" height="10.800" fill="none" stroke="#d0d0d0" stroke-width="1.2"/><rect x="1.5" y="1.5" width="3" height="3" fill="#9a9a9a"/><rect x="1.5" y="7.5" width="3" height="3" fill="#9a9a9a"/><rect x="4.5" y="4.5" width="3" height="3" fill="#9a9a9a"/><rect x="7.5" y="1.5" width="3" height="3" fill="#9a9a9a"/><rect x="7.5" y="7.5" width="3" height="3" fill="#9a9a9a"/><rect x="10.5" y="4.5" width="3" height="3" fill="#9a9a9a"/></svg>
<div style="left:480.5px;top:255.5px;width:21.5px;height:18px;background:#3e3e3e;border:1px solid #565656;border-radius:2px;"></div>
<svg style="left:483px;top:257px;" width="17" height="15" viewBox="0 0 17 15"><path d="M3 4 L13.500 2 L12.500 12 L2.500 11.500 Z" fill="none" stroke="#3db4f5" stroke-width="1.500"/><rect x="1" y="9.800" width="3" height="3" fill="#3db4f5"/><rect x="11.300" y="10.300" width="3" height="3" fill="#3db4f5"/><rect x="12" y="0.500" width="3" height="3" fill="#3db4f5"/><rect x="1.600" y="2.600" width="3" height="3" fill="#3db4f5"/></svg>
<svg style="left:506px;top:258px;" width="8" height="13" viewBox="0 0 8 13"><path d="M7 0.700 H0.700 V11.300 H7" fill="none" stroke="#d0d0d0" stroke-width="1.300"/><rect x="3.500" y="3.500" width="4.500" height="5" fill="#d0d0d0"/></svg>
<div style="left:517.5px;top:42px;width:176.5px;height:146px;background:#4b4b4b;"></div>
<div style="left:531px;top:49.5px;height:17px;line-height:17px;font-size:12px;white-space:pre;color:#d8d8d8;letter-spacing:1px;">字符</div>
<div style="left:568px;top:55px;width:9px;height:1px;background:#b8b8b8;"></div>
<div style="left:568px;top:58px;width:9px;height:1px;background:#b8b8b8;"></div>
<div style="left:568px;top:61px;width:9px;height:1px;background:#b8b8b8;"></div>
<div style="left:523px;top:79.5px;width:121px;height:18px;background:#444444;border:1px solid #5b5b5b;border-radius:3px;"></div>
<div style="left:625px;top:80.5px;width:1px;height:16px;background:#5b5b5b;"></div>
<div style="left:530px;top:80.8px;height:16px;line-height:16px;font-size:11.2px;white-space:pre;color:#e6e6e6;letter-spacing:-0.300px;">Arial</div>
<svg style="left:630px;top:85.6px;" width="9" height="5.8" viewBox="0 0 9 5.8"><path d="M1 1 L4.5 4.8 L8 1" fill="none" stroke="#d0d0d0" stroke-width="1.3"/></svg>
<div style="left:523px;top:103.5px;width:121px;height:18px;background:#444444;border:1px solid #5b5b5b;border-radius:3px;"></div>
<div style="left:625px;top:104.5px;width:1px;height:16px;background:#5b5b5b;"></div>
<div style="left:530px;top:104.8px;height:16px;line-height:16px;font-size:11.2px;white-space:pre;color:#e6e6e6;letter-spacing:-0.300px;">Regular</div>
<svg style="left:630px;top:110.1px;" width="9" height="5.8" viewBox="0 0 9 5.8"><path d="M1 1 L4.5 4.8 L8 1" fill="none" stroke="#d0d0d0" stroke-width="1.3"/></svg>
<svg style="left:649px;top:81px;" width="20" height="20" viewBox="0 0 20 20"><path d="M13.500 1 C15 -0.200 17.500 1.500 17 3.500 L15.500 5.500 L16.500 6.500 L14.800 8.200 L11 4.400 L12.700 2.700 Z" fill="#cfcfcf"/><path d="M11.500 6 L3 14.500 L2 17.500 L5 16.500 L13.500 8" fill="none" stroke="#cfcfcf" stroke-width="1.300"/></svg>
<div style="left:648.5px;top:104.5px;width:20.5px;height:16.5px;background:#fff;border:1px solid #8a8a8a;"></div>
<div style="left:649.5px;top:105.5px;width:18.5px;height:6.5px;background:#000;"></div>
<div style="left:673.5px;top:79.5px;width:21.5px;height:29px;background:#fff;border:1px solid #2a2a2a;"></div>
<div style="left:673.5px;top:109.5px;width:11.5px;height:11.5px;background:#fff;border:1px solid #2a2a2a;"></div>
<svg style="left:673.5px;top:109.5px;" width="11.5" height="11.5" viewBox="0 0 11.5 11.5"><path d="M1 10.5 L10.5 1" stroke="#e01616" stroke-width="1"/></svg>
<div style="left:686.5px;top:109.5px;width:11.5px;height:11.5px;background:#fff;border:1px solid #2a2a2a;"></div>
<svg style="left:686.5px;top:109.5px;" width="11.5" height="11.5" viewBox="0 0 11.5 11.5"><path d="M1 10.5 L10.5 1" stroke="#e01616" stroke-width="2"/></svg>
<div style="left:523px;top:126.5px;width:171px;height:1px;background:#5a5a5a;"></div>
<div style="left:522px;top:136.5px;height:14px;line-height:14px;font-size:10px;white-space:pre;color:#d8d8d8;font-family:'Liberation Serif','Noto Serif CJK SC',serif;font-weight:bold;">T</div>
<div style="left:527.5px;top:127px;height:25px;line-height:25px;font-size:18px;white-space:pre;color:#d8d8d8;font-family:'Liberation Serif','Noto Serif CJK SC',serif;font-weight:bold;">T</div>
<div style="left:547px;top:133px;height:16px;line-height:16px;font-size:11.5px;white-space:pre;color:#3db4f5;">78</div>
<div style="left:563.5px;top:132.5px;height:17px;line-height:17px;font-size:12px;white-space:pre;color:#a8a8a8;letter-spacing:1px;">像素</div>
<svg style="left:601px;top:137px;" width="8" height="8" viewBox="0 0 8 8"><path d="M0.5 0.5 H7.5 L4 7.5 Z" fill="#d8d8d8"/></svg>
<svg style="left:625px;top:132px;" width="18" height="18" viewBox="0 0 18 18"><path d="M1.5 9 V17 M0 11 L1.5 9 L3 11 M0 15 L1.5 17 L3 15" fill="none" stroke="#d0d0d0" stroke-width="1"/><path d="M7.5 7.5 L11 0.5 L14.5 7.500 M8.5 5.500 H13.500 M6 7.500 H16" fill="none" stroke="#d0d0d0" stroke-width="1"/><path d="M7.5 16.500 L11 9.500 L14.5 16.500 M8.500 14.500 H13.500 M6 16.500 H16" fill="none" stroke="#d0d0d0" stroke-width="1"/></svg>
<div style="left:652.5px;top:132.5px;height:17px;line-height:17px;font-size:12px;white-space:pre;color:#3d9fe0;letter-spacing:1px;">自动</div>
<div style="left:521.5px;top:151px;height:16px;line-height:16px;font-size:11.5px;white-space:pre;color:#d0d0d0;letter-spacing:-1.5px;">V/A</div>
<svg style="left:530px;top:165.5px;" width="10" height="5" viewBox="0 0 10 5"><path d="M10 2.500 H1.500 M3.500 0.500 L1 2.500 L3.500 4.500" fill="none" stroke="#d0d0d0" stroke-width="1"/></svg>
<div style="left:548.5px;top:152.5px;height:16px;line-height:16px;font-size:11.5px;white-space:pre;color:#6e6e6e;letter-spacing:1px;">度量标准</div>
<svg style="left:601px;top:156.5px;" width="8" height="8" viewBox="0 0 8 8"><path d="M0.5 0.5 H7.5 L4 7.5 Z" fill="#d8d8d8"/></svg>
<div style="left:628.5px;top:154.5px;width:19px;height:11px;background:#d0d0d0;"></div>
<div style="left:629.5px;top:154.5px;height:11px;line-height:11px;font-size:10.5px;white-space:pre;color:#3a3a3a;letter-spacing:-0.8px;font-weight:bold;">VA</div>
<svg style="left:628px;top:166.5px;" width="20" height="6" viewBox="0 0 20 6"><path d="M1 3 H19 M3.500 0.500 L1 3 L3.500 5.500 M16.500 0.500 L19 3 L16.500 5.500" fill="none" stroke="#d0d0d0" stroke-width="1"/></svg>
<div style="left:649px;top:151.5px;height:16px;line-height:16px;font-size:11.5px;white-space:pre;color:#3db4f5;">0</div>
<div style="left:517.5px;top:183px;width:176.5px;height:1px;background:#555;"></div>
<div style="left:525px;top:186px;width:18px;height:1.2px;background:#c0c0c0;"></div>
<div style="left:551px;top:185.5px;width:12px;height:2px;background:#8a8a8a;"></div>
<div style="left:517.5px;top:188px;width:176.5px;height:4px;background:#434343;"></div>
<div style="left:517.5px;top:192px;width:176.5px;height:83px;background:#4b4b4b;"></div>
<div style="left:531px;top:199px;height:17px;line-height:17px;font-size:12px;white-space:pre;color:#d8d8d8;letter-spacing:1px;">段落</div>
<div style="left:568px;top:204.5px;width:9px;height:1px;background:#b8b8b8;"></div>
<div style="left:568px;top:207.5px;width:9px;height:1px;background:#b8b8b8;"></div>
<div style="left:568px;top:210.5px;width:9px;height:1px;background:#b8b8b8;"></div>
<div style="left:524px;top:224.3px;width:21.5px;height:21.5px;background:#3e3e3e;border:1px solid #585858;border-radius:2px;"></div>
<svg style="left:526.8px;top:228.6px;" width="15" height="14" viewBox="0 0 15 14"><rect x="0" y="0" width="15" height="1.100" fill="#4ab4f0"/><rect x="0" y="3.05" width="12" height="1.100" fill="#4ab4f0"/><rect x="0" y="6.1" width="15" height="1.100" fill="#4ab4f0"/><rect x="0" y="9.15" width="12" height="1.100" fill="#4ab4f0"/><rect x="0" y="12.2" width="15" height="1.100" fill="#4ab4f0"/></svg>
<svg style="left:551.8px;top:228.6px;" width="15" height="14" viewBox="0 0 15 14"><rect x="0" y="0" width="15" height="1.100" fill="#c6c6c6"/><rect x="2" y="3.05" width="11" height="1.100" fill="#c6c6c6"/><rect x="0" y="6.1" width="15" height="1.100" fill="#c6c6c6"/><rect x="2" y="9.15" width="11" height="1.100" fill="#c6c6c6"/><rect x="0" y="12.2" width="15" height="1.100" fill="#c6c6c6"/></svg>
<svg style="left:576.5px;top:228.6px;" width="15" height="14" viewBox="0 0 15 14"><rect x="0" y="0" width="15" height="1.100" fill="#c6c6c6"/><rect x="3" y="3.05" width="12" height="1.100" fill="#c6c6c6"/><rect x="0" y="6.1" width="15" height="1.100" fill="#c6c6c6"/><rect x="3" y="9.15" width="12" height="1.100" fill="#c6c6c6"/><rect x="0" y="12.2" width="15" height="1.100" fill="#c6c6c6"/></svg>
<svg style="left:606.5px;top:228.6px;" width="15" height="14" viewBox="0 0 15 14"><rect x="0" y="0" width="15" height="1.100" fill="#c6c6c6"/><rect x="0" y="3.05" width="15" height="1.100" fill="#c6c6c6"/><rect x="0" y="6.1" width="15" height="1.100" fill="#c6c6c6"/><rect x="0" y="9.15" width="15" height="1.100" fill="#c6c6c6"/><rect x="0" y="12.2" width="10" height="1.100" fill="#c6c6c6"/></svg>
<svg style="left:630.5px;top:228.6px;" width="15" height="14" viewBox="0 0 15 14"><rect x="0" y="0" width="15" height="1.100" fill="#c6c6c6"/><rect x="0" y="3.05" width="15" height="1.100" fill="#c6c6c6"/><rect x="0" y="6.1" width="15" height="1.100" fill="#c6c6c6"/><rect x="0" y="9.15" width="15" height="1.100" fill="#c6c6c6"/><rect x="3" y="12.2" width="9" height="1.100" fill="#c6c6c6"/></svg>
<svg style="left:655.5px;top:228.6px;" width="15" height="14" viewBox="0 0 15 14"><rect x="0" y="0" width="15" height="1.100" fill="#c6c6c6"/><rect x="0" y="3.05" width="15" height="1.100" fill="#c6c6c6"/><rect x="0" y="6.1" width="15" height="1.100" fill="#c6c6c6"/><rect x="0" y="9.15" width="15" height="1.100" fill="#c6c6c6"/><rect x="5" y="12.2" width="10" height="1.100" fill="#c6c6c6"/></svg>
<svg style="left:681.5px;top:228.6px;" width="15" height="14" viewBox="0 0 15 14"><rect x="0" y="0" width="15" height="1.100" fill="#c6c6c6"/><rect x="0" y="3.05" width="15" height="1.100" fill="#c6c6c6"/><rect x="0" y="6.1" width="15" height="1.100" fill="#c6c6c6"/><rect x="0" y="9.15" width="15" height="1.100" fill="#c6c6c6"/><rect x="0" y="12.2" width="15" height="1.100" fill="#c6c6c6"/></svg>
<div style="left:524px;top:251.8px;width:165px;height:1px;background:#5a5a5a;"></div>
<svg style="left:524px;top:256.5px;" width="16" height="14.5" viewBox="0 0 16 14.5"><path d="M0 6.500 H4.500 M3 4.500 L5 6.500 L3 8.500" fill="none" stroke="#cfcfcf" stroke-width="1.100"/><path d="M7.500 0 V13" stroke="#cfcfcf" stroke-width="1.100"/><path d="M9 2.500 H15 M9 5.200 H13.500 M9 7.900 H15 M9 10.600 H13.500" stroke="#cfcfcf" stroke-width="1.100"/></svg>
<div style="left:545px;top:252.5px;height:18px;line-height:18px;font-size:12.5px;white-space:pre;color:#3db4f5;">0</div>
<div style="left:556px;top:255px;height:17px;line-height:17px;font-size:12px;white-space:pre;color:#c0c0c0;letter-spacing:1px;">像素</div>
<svg style="left:595px;top:256.5px;" width="16" height="14.5" viewBox="0 0 16 14.5"><path d="M0 3.500 H4 M2.500 1.500 L4.500 3.500 L2.500 5.500" fill="none" stroke="#cfcfcf" stroke-width="1.100"/><rect x="6.500" y="1" width="8.500" height="4" fill="none" stroke="#cfcfcf" stroke-width="1.100"/><path d="M4 8 H15 M6 10.600 H13 M6 13.200 H13" stroke="#cfcfcf" stroke-width="1.100"/></svg>
<div style="left:617px;top:252.5px;height:18px;line-height:18px;font-size:12.5px;white-space:pre;color:#3db4f5;">0</div>
<div style="left:627.5px;top:255px;height:17px;line-height:17px;font-size:12px;white-space:pre;color:#c0c0c0;letter-spacing:1px;">像素</div>
<svg style="left:661px;top:254.5px;" width="16" height="14.5" viewBox="0 0 16 14.5"><path d="M0 2.500 H4 M2.500 0.500 L4.500 2.500 L2.500 4.500" fill="none" stroke="#cfcfcf" stroke-width="1.100"/><path d="M6 2.500 H15 M4 5.200 H15 M6 7.900 H13.500 M6 10.600 H13.500 M6 13.300 H13.500" stroke="#cfcfcf" stroke-width="1.100"/></svg>
<div style="left:681.5px;top:252.5px;height:18px;line-height:18px;font-size:12.5px;white-space:pre;color:#3db4f5;">0</div>
<div style="left:0px;top:279px;width:483.5px;height:163px;background:#676767;"></div>
<svg style="left:11.5px;top:290.5px;" width="7" height="7" viewBox="0 0 7 7"><path d="M0.8 0.8 L6.2 6.2 M6.2 0.8 L0.8 6.2" stroke="#a8a8a8" stroke-width="1"/></svg>
<div style="left:26.5px;top:287.5px;width:10.5px;height:9.5px;background:#c0ab88;"></div>
<div style="left:47.5px;top:285.5px;height:16px;line-height:16px;font-size:11.5px;white-space:pre;color:#f0f0f0;">01</div>
<div style="left:70px;top:291.5px;width:9px;height:1px;background:#d0d0d0;"></div>
<div style="left:70px;top:294.5px;width:9px;height:1px;background:#d0d0d0;"></div>
<div style="left:70px;top:297.5px;width:9px;height:1px;background:#d0d0d0;"></div>
<div style="left:24.5px;top:309px;height:20px;line-height:20px;font-size:14.6px;white-space:pre;color:#62c6f2;font-weight:bold;letter-spacing:-0.150px;">0:00:05:12</div>
<div style="left:12px;top:327px;height:15px;line-height:15px;font-size:10.5px;white-space:pre;color:#3e8cc8;font-family:'Liberation Mono','Noto Serif CJK SC',monospace;letter-spacing:-0.750px;">00137 (25.00 fps)</div>
<div style="left:123px;top:314.5px;width:123px;height:18.5px;background:#5e5e5e;border:1px solid #727272;border-radius:3px;"></div>
<svg style="left:129px;top:318px;" width="16" height="12" viewBox="0 0 16 12"><circle cx="6.5" cy="4.5" r="3.4" fill="none" stroke="#e0e0e0" stroke-width="1.3"/><path d="M4.3 7.3 L1 11" stroke="#e0e0e0" stroke-width="1.4"/><path d="M10.5 8 H15.5 L13 10.8 Z" fill="#e0e0e0"/></svg>
<svg style="left:262px;top:317px;" width="18" height="14" viewBox="0 0 18 14"><rect x="0" y="2" width="6" height="2" fill="#dcdcdc"/><path d="M5 3 H9 V10 H12 M9 6.500 H12" fill="none" stroke="#dcdcdc" stroke-width="1.100"/><rect x="11.500" y="5" width="4" height="3" fill="#dcdcdc"/><rect x="11.500" y="8.500" width="4" height="3" fill="#dcdcdc"/><path d="M12 12.500 H16 L14 14 Z" fill="#dcdcdc"/></svg>
<svg style="left:295px;top:317px;" width="18" height="14" viewBox="0 0 18 14"><path d="M2 8 C2 2 16 2 16 8 Z" fill="#dcdcdc"/><rect x="8.200" y="0.500" width="1.600" height="3" fill="#dcdcdc"/><rect x="1" y="9" width="16" height="4.500" fill="#dcdcdc" opacity="0.550"/><rect x="7" y="5" width="4" height="6" fill="#dcdcdc"/></svg>
<svg style="left:322px;top:316.5px;" width="17" height="15" viewBox="0 0 17 15"><rect x="4.500" y="0.500" width="12" height="11.500" fill="#dcdcdc"/><path d="M5.500 2 V11 M15.500 2 V11" stroke="#4b4b4b" stroke-width="1.200" stroke-dasharray="1.300 1.300"/><rect x="0.500" y="4" width="12" height="10.500" fill="#dcdcdc" stroke="#4b4b4b" stroke-width="0.800"/><path d="M2 6 H11 M2 8.500 H11 M2 11 H11" stroke="#4b4b4b" stroke-width="0.800"/></svg>
<svg style="left:347px;top:316.5px;" width="19" height="16" viewBox="0 0 19 16"><ellipse cx="11" cy="6" rx="6.500" ry="5.500" fill="#dcdcdc"/><ellipse cx="9" cy="8" rx="6.500" ry="5.500" fill="#a8a8a8" stroke="#4b4b4b" stroke-width="0.800"/><ellipse cx="7.500" cy="10" rx="6.500" ry="5.500" fill="none" stroke="#dcdcdc" stroke-width="1"/></svg>
<svg style="left:381px;top:316px;" width="18" height="17" viewBox="0 0 18 17"><rect x="1.500" y="3.500" width="15" height="12.500" fill="none" stroke="#dcdcdc" stroke-width="1.200"/><path d="M1.500 5 H6 C9 5 9 15 16 15" fill="none" stroke="#dcdcdc" stroke-width="1.200"/><path d="M4 0.500 V3.500 M8.500 0.500 V3.500 M13 0.500 V3.500" stroke="#dcdcdc" stroke-width="1.200"/></svg>
<div style="left:0px;top:334px;width:413px;height:1px;background:#4a4a4a;"></div>
<div style="left:0px;top:341px;width:483px;height:1.5px;background:#4a4a4a;"></div>
<div style="left:0px;top:342.5px;width:413px;height:19px;background:#878787;"></div>
<div style="left:0px;top:361.5px;width:413px;height:1.5px;background:#3c3c3c;"></div>
<svg style="left:6.5px;top:348px;" width="11" height="8" viewBox="0 0 11 8"><path d="M0.500 4 C3 0.300 8 0.300 10.500 4 C8 7.700 3 7.700 0.500 4 Z" fill="#c8c8c8"/><circle cx="5.500" cy="4" r="2.100" fill="#777"/><circle cx="5.500" cy="4" r="0.900" fill="#c8c8c8"/></svg>
<svg style="left:20px;top:347px;" width="11" height="10" viewBox="0 0 11 10"><path d="M0.500 3.500 H2.500 L5.500 0.500 V9.500 L2.500 6.500 H0.500 Z" fill="#c8c8c8"/><path d="M7 2.500 C8.500 4 8.500 6 7 7.500 M8.500 1 C11 3.500 11 6.500 8.500 9" fill="none" stroke="#c8c8c8" stroke-width="1"/></svg>
<svg style="left:35px;top:349px;" width="6" height="6" viewBox="0 0 6 6"><circle cx="3" cy="3" r="2.700" fill="#c8c8c8"/></svg>
<svg style="left:47px;top:346px;" width="10" height="11" viewBox="0 0 10 11"><path d="M2.200 5 V3.400 a2.800 2.800 0 0 1 5.600 0 V5" fill="none" stroke="#c8c8c8" stroke-width="1.400"/><rect x="1" y="5" width="8" height="6" fill="#c8c8c8"/><rect x="4.300" y="7" width="1.400" height="2.200" fill="#666"/></svg>
<svg style="left:82px;top:345px;" width="15" height="13" viewBox="0 0 15 13"><path d="M1 1 H7 L14 8 L8.600 12.500 L1 5.500 Z" fill="#c8c8c8"/></svg>
<div style="left:69px;top:345px;width:1px;height:14px;background:#6a6a6a;"></div>
<div style="left:101px;top:345px;width:1px;height:14px;background:#6a6a6a;"></div>
<div style="left:134px;top:345px;width:1px;height:14px;background:#6a6a6a;"></div>
<div style="left:234px;top:345px;width:1px;height:14px;background:#6a6a6a;"></div>
<div style="left:397px;top:345px;width:1px;height:14px;background:#6a6a6a;"></div>
<div style="left:109px;top:345px;height:14px;line-height:14px;font-size:10px;white-space:pre;color:#d8d8d8;font-family:'Liberation Mono','Noto Serif CJK SC',monospace;">#</div>
<div style="left:139px;top:343.5px;height:17px;line-height:17px;font-size:12px;white-space:pre;color:#c4c4c4;letter-spacing:1.500px;">源名称</div>
<div style="left:240px;top:343.5px;height:17px;line-height:17px;font-size:12px;white-space:pre;color:#c4c4c4;letter-spacing:1.500px;">模式</div>
<div style="left:315px;top:344.5px;height:15px;line-height:15px;font-size:10.5px;white-space:pre;color:#d8d8d8;">T</div>
<div style="left:330.5px;top:344.5px;height:15px;line-height:15px;font-size:11px;white-space:pre;color:#d8d8d8;letter-spacing:-0.200px;">TrkMat</div>
<div style="left:0px;top:363px;width:413px;height:63px;background:#777777;"></div>
<div style="left:233.5px;top:363px;width:179.5px;height:63px;background:#727272;"></div>
<div style="left:6px;top:363.5px;width:12.5px;height:14px;background:#555562;"></div>
<svg style="left:7px;top:366.5px;" width="11" height="8" viewBox="0 0 11 8"><path d="M0.500 4 C3 0.300 8 0.300 10.500 4 C8 7.700 3 7.700 0.500 4 Z" fill="#ececec"/><circle cx="5.500" cy="4" r="2.100" fill="#3a3a3a"/><circle cx="5.500" cy="4" r="0.900" fill="#ececec"/></svg>
<div style="left:35.5px;top:364px;width:13px;height:12.5px;background:#636363;"></div>
<div style="left:50.5px;top:364px;width:13px;height:12.5px;background:#636363;"></div>
<div style="left:86px;top:363.5px;width:14.5px;height:15px;background:#c85454;"></div>
<svg style="left:74.5px;top:367px;" width="6" height="9" viewBox="0 0 6 9"><path d="M1.300 1.200 L4.500 4.500 L1.300 7.800" fill="none" stroke="#e4e4e4" stroke-width="1.300"/></svg>
<div style="left:107.5px;top:363.5px;height:17px;line-height:17px;font-size:12px;white-space:pre;color:#f0f0f0;font-family:'Liberation Serif','Noto Serif CJK SC',serif;">1</div>
<div style="left:138.5px;top:360.5px;height:20px;line-height:20px;font-size:14px;white-space:pre;color:#e4e4e4;font-family:'Liberation Serif','Noto Serif CJK SC',serif;">T</div>
<div style="left:158px;top:366.3px;height:15px;line-height:15px;font-size:10.8px;white-space:pre;color:#f4f4f4;font-family:'Liberation Mono','Noto Serif CJK SC',monospace;letter-spacing:-0.550px;">Smooth ...</div>
<div style="left:236.5px;top:364px;width:67.5px;height:14.5px;background:#666666;"></div>
<div style="left:243px;top:363.8px;height:15px;line-height:15px;font-size:11px;white-space:pre;color:#dcdcdc;letter-spacing:1px;font-weight:300;">正常</div>
<svg style="left:291px;top:368.25px;" width="9" height="5.5" viewBox="0 0 9 5.5"><path d="M1 1 L4.5 4.5 L8 1" fill="none" stroke="#e8e8e8" stroke-width="1.3"/></svg>
<div style="left:310px;top:364px;width:13px;height:12.5px;background:#636363;"></div>
<div style="left:6px;top:383px;width:12.5px;height:14px;background:#555562;"></div>
<svg style="left:7px;top:386px;" width="11" height="8" viewBox="0 0 11 8"><path d="M0.500 4 C3 0.300 8 0.300 10.500 4 C8 7.700 3 7.700 0.500 4 Z" fill="#ececec"/><circle cx="5.500" cy="4" r="2.100" fill="#3a3a3a"/><circle cx="5.500" cy="4" r="0.900" fill="#ececec"/></svg>
<div style="left:35.5px;top:383.5px;width:13px;height:12.5px;background:#636363;"></div>
<div style="left:50.5px;top:383.5px;width:13px;height:12.5px;background:#636363;"></div>
<div style="left:86px;top:383px;width:14.5px;height:15px;background:#b8b4d8;"></div>
<svg style="left:74.5px;top:386.5px;" width="6" height="9" viewBox="0 0 6 9"><path d="M1.300 1.200 L4.500 4.500 L1.300 7.800" fill="none" stroke="#e4e4e4" stroke-width="1.300"/></svg>
<div style="left:107.5px;top:383px;height:17px;line-height:17px;font-size:12px;white-space:pre;color:#f0f0f0;font-family:'Liberation Serif','Noto Serif CJK SC',serif;">2</div>
<svg style="left:136px;top:382px;" width="17" height="17" viewBox="0 0 17 17"><path d="M2.500 2.500 H11 L15.500 7 V17.500 H2.500 Z" fill="#e6f1fb"/><path d="M11 2.500 L15.500 7 H11 Z" fill="#b4cfe8"/><rect x="0" y="0.500" width="11.500" height="6" rx="1.200" fill="#2d8ceb"/><path d="M2 3.500 H4.500 M5.500 3.500 H7 M8 3.500 H9.500" stroke="#cfe6ff" stroke-width="1.100"/><path d="M5 12 H8 V15 H5 Z M9.500 9.500 H12.500 V12.500 H9.500 Z" fill="#bcd8f2"/></svg>
<div style="left:158px;top:385.8px;height:15px;line-height:15px;font-size:10.8px;white-space:pre;color:#f4f4f4;font-family:'Liberation Mono','Noto Serif CJK SC',monospace;letter-spacing:-0.550px;">02.jpg</div>
<div style="left:236.5px;top:383.5px;width:67.5px;height:14.5px;background:#666666;"></div>
<div style="left:243px;top:383.3px;height:15px;line-height:15px;font-size:11px;white-space:pre;color:#dcdcdc;letter-spacing:1px;font-weight:300;">正常</div>
<svg style="left:291px;top:387.75px;" width="9" height="5.5" viewBox="0 0 9 5.5"><path d="M1 1 L4.5 4.5 L8 1" fill="none" stroke="#e8e8e8" stroke-width="1.3"/></svg>
<div style="left:310px;top:383.5px;width:13px;height:12.5px;background:#636363;"></div>
<div style="left:328.5px;top:383.5px;width:64.5px;height:14.5px;background:#666666;"></div>
<div style="left:335px;top:383.3px;height:15px;line-height:15px;font-size:11px;white-space:pre;color:#dcdcdc;font-weight:300;">无</div>
<svg style="left:379px;top:387.75px;" width="9" height="5.5" viewBox="0 0 9 5.5"><path d="M1 1 L4.5 4.5 L8 1" fill="none" stroke="#e8e8e8" stroke-width="1.3"/></svg>
<div style="left:6px;top:403px;width:12.5px;height:14px;background:#555562;"></div>
<svg style="left:7px;top:406px;" width="11" height="8" viewBox="0 0 11 8"><path d="M0.500 4 C3 0.300 8 0.300 10.500 4 C8 7.700 3 7.700 0.500 4 Z" fill="#ececec"/><circle cx="5.500" cy="4" r="2.100" fill="#3a3a3a"/><circle cx="5.500" cy="4" r="0.900" fill="#ececec"/></svg>
<div style="left:35.5px;top:403.5px;width:13px;height:12.5px;background:#636363;"></div>
<div style="left:50.5px;top:403.5px;width:13px;height:12.5px;background:#636363;"></div>
<div style="left:86px;top:403px;width:14.5px;height:15px;background:#c85454;"></div>
<svg style="left:74.5px;top:406.5px;" width="6" height="9" viewBox="0 0 6 9"><path d="M1.300 1.200 L4.500 4.500 L1.300 7.800" fill="none" stroke="#e4e4e4" stroke-width="1.300"/></svg>
<div style="left:107.5px;top:403px;height:17px;line-height:17px;font-size:12px;white-space:pre;color:#f0f0f0;font-family:'Liberation Serif','Noto Serif CJK SC',serif;">3</div>
<div style="left:135.5px;top:402px;width:17px;height:16.5px;background:#252525;"></div>
<div style="left:158px;top:405.8px;height:15px;line-height:15px;font-size:10.8px;white-space:pre;color:#f4f4f4;font-family:'Liberation Mono','Noto Serif CJK SC',monospace;letter-spacing:-0.550px;">黑色 纯色 1</div>
<div style="left:236.5px;top:403.5px;width:67.5px;height:14.5px;background:#666666;"></div>
<div style="left:243px;top:403.3px;height:15px;line-height:15px;font-size:11px;white-space:pre;color:#dcdcdc;letter-spacing:1px;font-weight:300;">正常</div>
<svg style="left:291px;top:407.75px;" width="9" height="5.5" viewBox="0 0 9 5.5"><path d="M1 1 L4.5 4.5 L8 1" fill="none" stroke="#e8e8e8" stroke-width="1.3"/></svg>
<div style="left:310px;top:403.5px;width:13px;height:12.5px;background:#636363;"></div>
<div style="left:328.5px;top:403.5px;width:64.5px;height:14.5px;background:#666666;"></div>
<div style="left:335px;top:403.3px;height:15px;line-height:15px;font-size:11px;white-space:pre;color:#dcdcdc;font-weight:300;">无</div>
<svg style="left:379px;top:407.75px;" width="9" height="5.5" viewBox="0 0 9 5.5"><path d="M1 1 L4.5 4.5 L8 1" fill="none" stroke="#e8e8e8" stroke-width="1.3"/></svg>
<div style="left:6px;top:423px;width:12.5px;height:3px;background:#555562;"></div>
<div style="left:35.5px;top:423.5px;width:13px;height:2.5px;background:#636363;"></div>
<div style="left:50.5px;top:423.5px;width:13px;height:2.5px;background:#636363;"></div>
<div style="left:86px;top:423px;width:14.5px;height:3px;background:#b8b4d8;"></div>
<div style="left:0px;top:411.5px;width:463px;height:1px;background:#505050;"></div>
<div style="left:0px;top:425.5px;width:483.5px;height:16.5px;background:#707070;"></div>
<div style="left:137px;top:422.5px;width:12.5px;height:3px;background:#5ab0f0;border-radius:3px 3px 0 0;"></div>
<div style="left:0px;top:425px;width:483.5px;height:1px;background:#5a5a5a;"></div>
<svg style="left:9px;top:428.5px;" width="12" height="12" viewBox="0 0 12 12"><rect x="0.600" y="0.600" width="7" height="7" fill="none" stroke="#d4d4d4" stroke-width="1.100"/><rect x="3.200" y="3.200" width="7.600" height="7.600" fill="#707070" stroke="#d4d4d4" stroke-width="1.100"/><rect x="6" y="6" width="2" height="2" fill="#d4d4d4"/></svg>
<div style="left:24.5px;top:426px;width:15.5px;height:16px;background:#5c5c5c;"></div>
<svg style="left:27.5px;top:428px;" width="12" height="12" viewBox="0 0 12 12"><circle cx="4.500" cy="4.500" r="3.800" fill="none" stroke="#4ab4f0" stroke-width="1.300"/><rect x="5" y="5" width="6" height="6" fill="none" stroke="#4ab4f0" stroke-width="1.300"/></svg>
<svg style="left:46px;top:428.5px;" width="12" height="11" viewBox="0 0 12 11"><path d="M4.500 0.500 C3 0.500 4 4.500 1.300 5.500 C4 6.500 3 10.500 4.500 10.500 Z M7.500 0.500 C9 0.500 8 4.500 10.700 5.500 C8 6.500 9 10.500 7.500 10.500 Z" fill="#d4d4d4"/></svg>
<svg style="left:65px;top:429px;" width="14" height="10" viewBox="0 0 14 10"><ellipse cx="5" cy="4.500" rx="4.200" ry="3.800" fill="#d4d4d4"/><rect x="0.500" y="7.800" width="10.500" height="1.600" fill="#d4d4d4"/><path d="M10 1.500 L11 4.500 M13 1 L11.800 5 M10 6.500 L11.800 5" stroke="#d4d4d4" stroke-width="1" fill="none"/></svg>
<div style="left:87px;top:425.5px;height:17px;line-height:17px;font-size:12px;white-space:pre;color:#d4d4d4;letter-spacing:1.100px;">帧渲染时间</div>
<div style="left:160.5px;top:426px;height:16px;line-height:16px;font-size:11.5px;white-space:pre;color:#4fd0a0;letter-spacing:0.900px;">20毫秒</div>
<div style="left:235px;top:426.5px;width:160.5px;height:15.5px;background:#666;border:1px solid #787878;"></div>
<div style="left:276px;top:426.5px;height:15px;line-height:15px;font-size:11px;white-space:pre;color:#c2c2c2;letter-spacing:0.700px;">切换开关/模式</div>
<svg style="left:419px;top:430px;" width="9" height="6" viewBox="0 0 9 6"><path d="M0.500 5.500 L4.500 1 L8.500 5.500 Z" fill="#e8e8e8"/></svg>
<svg style="left:438px;top:429px;" width="28" height="11" viewBox="0 0 28 11"><path d="M10 5.500 H27" stroke="#9a9a9a" stroke-width="1.200"/><circle cx="5.500" cy="5.500" r="3.800" fill="#6b6b6b" stroke="#f0f0f0" stroke-width="1.600"/></svg>
<div style="left:413px;top:308px;width:53px;height:118px;background:#6a6a6a;"></div>
<div style="left:454px;top:335px;width:1px;height:77px;background:#5c5c5c;"></div>
<svg style="left:466px;top:308px;" width="17.5" height="134" viewBox="0 0 17.5 134"><path d="M0 14 L17.500 0 V134 L0 118 Z" fill="#6b6b6b"/><path d="M0 14 L17.500 0 M0 118 L17.500 134" stroke="#5a5a5a" stroke-width="1"/></svg>
<div style="left:413px;top:308px;width:1px;height:118px;background:#5c5c5c;"></div>
<div style="left:414px;top:312.5px;width:51px;height:9.5px;background:#a2a2a2;"></div>
<div style="left:414px;top:312.5px;width:5.5px;height:9.5px;background:#5cc4f4;border-radius:5px 0 0 5px;"></div>
<div style="left:459.5px;top:312.5px;width:5.5px;height:9.5px;background:#5cc4f4;border-radius:0 5px 5px 0;"></div>
<div style="left:419px;top:312.5px;width:41px;height:1px;background:#3a3a3a;"></div>
<div style="left:414px;top:323.5px;height:13px;line-height:13px;font-size:9.5px;white-space:pre;color:#d8d8d8;">:00s</div>
<div style="left:419.5px;top:335px;width:1px;height:6px;background:#aaa;"></div>
<div style="left:419.5px;top:335px;width:38.5px;height:1px;background:#8a8a8a;"></div>
<div style="left:414px;top:342px;width:51px;height:15px;background:#a2a2a2;"></div>
<div style="left:414px;top:342px;width:5.5px;height:15px;background:#5cc4f4;border-radius:5px 0 0 5px;"></div>
<div style="left:459.5px;top:342px;width:5.5px;height:15px;background:#5cc4f4;border-radius:0 5px 5px 0;"></div>
<div style="left:419px;top:342px;width:41px;height:1px;background:#3a3a3a;"></div>
<div style="left:420.5px;top:358px;width:38px;height:3px;background:#2fbf4a;"></div>
<div style="left:421px;top:364.5px;width:37px;height:14.5px;background:#a85252;"></div>
<div style="left:421px;top:383.5px;width:37px;height:15.5px;background:#9a98c4;"></div>
<div style="left:421px;top:403.5px;width:37px;height:15.5px;background:#a85252;"></div>
<div style="left:421px;top:423px;width:37px;height:3px;background:#9a98c4;"></div>
<svg style="left:454px;top:327px;" width="11" height="13" viewBox="0 0 11 13"><path d="M0.500 0.500 H10.500 V6 L5.500 12 L0.500 6 Z" fill="#59bdf0"/><path d="M5.500 4 V12" stroke="#2a6a9a" stroke-width="0.800"/></svg>
<div style="left:459px;top:339px;width:1.2px;height:87px;background:#59bdf0;"></div>
<svg style="left:469.5px;top:344px;" width="11" height="15" viewBox="0 0 11 15"><path d="M0.500 0.500 H10.500 V10 L5.500 14.500 L0.500 10 Z" fill="#c6c6c6"/></svg>
<svg style="left:467px;top:364px;" width="15" height="13" viewBox="0 0 15 13"><path d="M4 1 L8 1 L8 3 L14 3 L14 9 L8 9 L8 11 L4 11 Z" fill="#d8d8d8"/><circle cx="4.500" cy="8" r="3.400" fill="#6e6e6e" stroke="#d8d8d8" stroke-width="1.300"/></svg>
<div style="left:467.5px;top:381px;width:13.5px;height:36px;background:#6a6a6a;border-radius:6px;"></div>
<svg style="left:6px;top:308px;" width="30" height="134" viewBox="0 0 30 134"><path d="M0 0 L27 30 V104 L0 134 Z" fill="#3a3868" opacity="0.550"/></svg>
<div style="left:17.5px;top:351.5px;width:26.5px;height:32.5px;border:1.500px solid #e01616;"></div>
<svg style="left:43px;top:279px;" width="110" height="92" viewBox="0 0 110 92"><path d="M102.500 6.500 L8.500 85" stroke="#e01616" stroke-width="1.400"/><path d="M7 86.500 L16.500 82.500 L12.500 77.500 Z" fill="#e01616"/></svg>
<svg style="left:19px;top:355px;" width="14" height="21" viewBox="0 0 14 21"><path d="M1 1 V16 L4.500 12.500 L7.500 19.500 L10 18.500 L7 11.800 H12 Z" fill="#111" stroke="#f4f4f4" stroke-width="0.900"/></svg>
<div style="left:33px;top:371px;width:7.5px;height:6px;background:#fff;border:1.500px solid #111;"></div>
<div style="left:487.5px;top:279px;width:206.5px;height:163px;background:#4b4b4b;"></div>
<div style="left:500px;top:285px;height:18px;line-height:18px;font-size:12.5px;white-space:pre;color:#dcdcdc;letter-spacing:0.800px;">效果和预设</div>
<div style="left:579px;top:291px;width:9px;height:1px;background:#b8b8b8;"></div>
<div style="left:579px;top:294px;width:9px;height:1px;background:#b8b8b8;"></div>
<div style="left:579px;top:297px;width:9px;height:1px;background:#b8b8b8;"></div>
<div style="left:492.5px;top:310px;width:196.5px;height:18px;background:#414141;border:1px solid #585858;border-radius:3px;"></div>
<svg style="left:499px;top:313px;" width="16" height="12" viewBox="0 0 16 12"><circle cx="6.5" cy="4.5" r="3.4" fill="none" stroke="#3da0e6" stroke-width="1.3"/><path d="M4.3 7.3 L1 11" stroke="#3da0e6" stroke-width="1.4"/><path d="M10.5 8 H15.5 L13 10.8 Z" fill="#3da0e6"/></svg>
<div style="left:520px;top:311px;height:16px;line-height:16px;font-size:11.5px;white-space:pre;color:#dcdcdc;letter-spacing:0.500px;">三色调</div>
<div style="left:561px;top:314.5px;width:58px;height:9px;background:#474747;"></div>
<svg style="left:677px;top:315px;" width="9" height="9" viewBox="0 0 9 9"><path d="M1 1 L8 8 M8 1 L1 8" stroke="#e0e0e0" stroke-width="1.500"/></svg>
<div style="left:487.5px;top:330.7px;width:205.5px;height:1.3px;background:#1c1c1c;"></div>
<div style="left:487.5px;top:332px;width:189.5px;height:16px;background:#595959;"></div>
<svg style="left:492.5px;top:337.75px;" width="8" height="5.5" viewBox="0 0 8 5.5"><path d="M1 1 L4 4.5 L7 1" fill="none" stroke="#d0d0d0" stroke-width="1.2"/></svg>
<div style="left:502.5px;top:333px;height:15px;line-height:15px;font-size:10.5px;white-space:pre;color:#d0d0d0;letter-spacing:0.200px;">颜色校正</div>
<div style="left:487.5px;top:348px;width:189.5px;height:1px;background:#525252;"></div>
<div style="left:487.5px;top:349px;width:189.5px;height:15.5px;background:#595959;"></div>
<div style="left:520.5px;top:352.5px;width:12px;height:10.5px;background:#c8c8c8;border-radius:1.500px;"></div>
<div style="left:522.5px;top:351px;width:2px;height:2px;background:#c8c8c8;"></div>
<div style="left:528.5px;top:351px;width:2px;height:2px;background:#c8c8c8;"></div>
<div style="left:521px;top:353px;height:10px;line-height:10px;font-size:9px;white-space:pre;color:#3a3a3a;letter-spacing:-0.500px;font-weight:bold;">32</div>
<div style="left:539px;top:352.5px;width:12px;height:10.5px;background:#c8c8c8;border-radius:1.500px;"></div>
<div style="left:541px;top:351px;width:2px;height:2px;background:#c8c8c8;"></div>
<div style="left:547px;top:351px;width:2px;height:2px;background:#c8c8c8;"></div>
<svg style="left:541px;top:354.5px;" width="9" height="7" viewBox="0 0 9 7"><rect x="0" y="0.500" width="4.500" height="1.200" fill="#3a3a3a"/><rect x="0" y="2.900" width="3" height="1.200" fill="#3a3a3a"/><rect x="0" y="5.300" width="4.500" height="1.200" fill="#3a3a3a"/><path d="M5 1 L8.500 3.500 L5 6 Z" fill="#3a3a3a"/></svg>
<div style="left:558px;top:349.5px;height:15px;line-height:15px;font-size:10.5px;white-space:pre;color:#d0d0d0;letter-spacing:0.200px;">三色调</div>
<div style="left:487.5px;top:425px;width:189.5px;height:1px;background:#3a3a3a;"></div>
<svg style="left:658px;top:427.5px;" width="13" height="13" viewBox="0 0 13 13"><path d="M3 0.500 H12.500 V12.500 H9 V4 H0.500 V3 Z" fill="#c8c8c8"/><path d="M2 5.500 H8 V11.500 Z" fill="#c8c8c8"/></svg>
</div>
<div id="R" class="ae">
<div style="left:0px;top:0px;width:693px;height:445px;background:#3c3c3c;"></div>
<div style="left:0px;top:0px;width:693px;height:20px;background:#fff;"></div>
<div style="left:4.8px;top:3.3px;height:16px;line-height:16px;font-size:12px;white-space:pre;color:#000;letter-spacing:-0.100px;">文件(F)</div>
<div style="left:49.2px;top:3.3px;height:16px;line-height:16px;font-size:12px;white-space:pre;color:#000;letter-spacing:-0.100px;">编辑(E)</div>
<div style="left:96.2px;top:3.3px;height:16px;line-height:16px;font-size:12px;white-space:pre;color:#000;letter-spacing:-0.100px;">合成(C)</div>
<div style="left:143.2px;top:3.3px;height:16px;line-height:16px;font-size:12px;white-space:pre;color:#000;letter-spacing:-0.100px;">图层(L)</div>
<div style="left:189px;top:3.3px;height:16px;line-height:16px;font-size:12px;white-space:pre;color:#000;letter-spacing:-0.100px;">效果(T)</div>
<div style="left:235.2px;top:3.3px;height:16px;line-height:16px;font-size:12px;white-space:pre;color:#000;letter-spacing:-0.100px;">动画(A)</div>
<div style="left:283.2px;top:3.3px;height:16px;line-height:16px;font-size:12px;white-space:pre;color:#000;letter-spacing:-0.100px;">视图(V)</div>
<div style="left:331.5px;top:3.3px;height:16px;line-height:16px;font-size:12px;white-space:pre;color:#000;letter-spacing:-0.100px;">窗口</div>
<div style="left:362.9px;top:3.3px;height:16px;line-height:16px;font-size:12px;white-space:pre;color:#000;letter-spacing:-0.100px;">帮助(H)</div>
<div style="left:0px;top:20px;width:694px;height:25px;background:#4a4a4a;"></div>
<div style="left:0px;top:44px;width:694px;height:2px;background:#3c3c3c;"></div>
<div style="left:2px;top:26px;width:1px;height:13px;background:#6a6a6a;"></div>
<div style="left:36px;top:23px;width:1px;height:20px;background:#565656;"></div>
<div style="left:116px;top:23px;width:1px;height:20px;background:#565656;"></div>
<div style="left:199px;top:23px;width:1px;height:20px;background:#565656;"></div>
<div style="left:254.5px;top:23px;width:1px;height:20px;background:#565656;"></div>
<div style="left:336.5px;top:23px;width:1px;height:20px;background:#565656;"></div>
<div style="left:417.5px;top:23px;width:1px;height:20px;background:#565656;"></div>
<div style="left:449.5px;top:23px;width:1px;height:20px;background:#565656;"></div>
<div style="left:501.5px;top:23px;width:1px;height:20px;background:#565656;"></div>
<svg style="left:12px;top:25px;" width="18" height="16" viewBox="0 0 18 16"><path d="M9 0.300 L11.800 2.900 V1.200 H14.200 V5.100 L17.800 8.500 H15.200 V15.700 H10.600 V10.800 H7.400 V15.700 H2.800 V8.500 H0.200 Z" fill="#c4c4c4"/></svg>
<div style="left:41px;top:22px;width:22px;height:21px;background:#3a3a3a;border:1px solid #5c5c5c;border-radius:2px;"></div>
<svg style="left:46px;top:24px;" width="14" height="18" viewBox="0 0 14 18"><path d="M1.2 0.8 L13 11 L6.5 11.6 L1.2 17 Z" fill="#31a8ff"/></svg>
<svg style="left:68px;top:24px;" width="18" height="18" viewBox="0 0 18 18"><g stroke="#c4c4c4" stroke-width="2.300" stroke-linecap="round"><path d="M6.200 9 L4.300 3.800 M8.300 8.500 L7.500 1.800 M10.600 8.500 L11.200 1.900 M12.700 9.500 L14.600 4.200"/><path d="M5 12.500 L1.800 9" stroke-width="2.400"/></g><path d="M4.600 8.500 H13.800 C14 13 12.500 16.800 9.200 16.800 C6.500 16.800 5 15 3.300 12 Z" fill="#c4c4c4"/></svg>
<svg style="left:93.5px;top:24px;" width="18" height="18" viewBox="0 0 18 18"><circle cx="6.8" cy="6.8" r="5.4" fill="none" stroke="#c4c4c4" stroke-width="1.4"/><path d="M10.8 10.8 L16.5 16.5" stroke="#c4c4c4" stroke-width="2" stroke-linecap="round"/></svg>
<svg style="left:123.5px;top:24px;" width="22" height="18" viewBox="0 0 22 18"><circle cx="11.5" cy="5.2" r="4.2" fill="#c4c4c4"/><path d="M6.5 4.5 C1 6 0.5 10 4 12" fill="none" stroke="#c4c4c4" stroke-width="1.5"/><path d="M3 13.8 L8.8 13.5 L5 9.6 Z" fill="#c4c4c4"/><path d="M15 9 C18 10 18.5 13.5 13 14.2 C10 14.5 8 13 9 11" fill="none" stroke="#c4c4c4" stroke-width="1.5"/><path d="M21 14 V17.5 H17.5 Z" fill="#c4c4c4"/></svg>
<svg style="left:150px;top:24px;" width="20" height="18" viewBox="0 0 20 18"><path d="M8.500 0.300 L12.200 4.300 H9.800 V7.200 H12.700 V4.800 L16.700 8.500 L12.700 12.200 V9.800 H9.800 V12.700 H12.200 L8.500 16.700 L4.800 12.700 H7.200 V9.800 H4.300 V12.200 L0.300 8.500 L4.300 4.800 V7.200 H7.200 V4.300 H4.800 Z" fill="#c4c4c4"/><path d="M19.500 14 V17.500 H16 Z" fill="#c4c4c4"/></svg>
<svg style="left:177px;top:24px;" width="16" height="18" viewBox="0 0 16 18"><path d="M6.500 0.300 L10.500 4.600 H7.900 V10.400 H11.800 L6.500 16.300 L1.200 10.400 H5.100 V4.600 H2.500 Z" fill="#c4c4c4"/><path d="M15.500 14 V17.500 H12 Z" fill="#c4c4c4"/></svg>
<svg style="left:205px;top:24px;" width="20" height="18" viewBox="0 0 20 18"><path d="M5 3.8 A7 7 0 0 1 17.5 9" fill="none" stroke="#c4c4c4" stroke-width="1.5"/><path d="M17.5 9 A7 7 0 0 1 4.5 12.5" fill="none" stroke="#c4c4c4" stroke-width="1.3" stroke-dasharray="1.2 1.6"/><path d="M2 1.5 L7.5 2 L3 6.8 Z" fill="#c4c4c4"/></svg>
<svg style="left:231px;top:25px;" width="18" height="16" viewBox="0 0 18 16"><rect x="0.8" y="0.8" width="16.4" height="14.4" fill="none" stroke="#c4c4c4" stroke-width="1.4" stroke-dasharray="3 2"/><path d="M3.500 6 L6 8 L3.500 10 Z M14.500 6 L12 8 L14.500 10 Z M7 3.800 L9 5.800 L11 3.800 Z M7 12.200 L9 10.200 L11 12.200 Z" fill="#c4c4c4"/></svg>
<svg style="left:263px;top:25px;" width="20" height="17" viewBox="0 0 20 17"><rect x="0.8" y="0.8" width="15" height="13" fill="#656565" stroke="#c4c4c4" stroke-width="1.4"/><path d="M19.5 13 V16.5 H16 Z" fill="#c4c4c4"/></svg>
<svg style="left:287px;top:24px;" width="20" height="18" viewBox="0 0 20 18"><path d="M10.5 1 L16 5.5 L13.5 8 L8.5 3.5 Z M7.8 4.4 L12.8 8.8 L9.5 14.5 L1 17 L3.5 8.5 Z" fill="#c4c4c4"/><circle cx="7.3" cy="10.6" r="1.3" fill="#4a4a4a"/><path d="M2 16 L6.6 11.3" stroke="#4a4a4a" stroke-width="0.9"/><path d="M19.5 14 V17.5 H16 Z" fill="#c4c4c4"/></svg>
<svg style="left:313px;top:25px;" width="20" height="17" viewBox="0 0 20 17"><path d="M0.5 0.5 H15.5 V4 H14.3 L13.8 2 H9.2 V13.5 L11.2 14 V15 H4.8 V14 L6.8 13.5 V2 H2.2 L1.7 4 H0.5 Z" fill="#c4c4c4"/><path d="M19.5 13 V16.5 H16 Z" fill="#c4c4c4"/></svg>
<svg style="left:344px;top:24px;" width="18" height="18" viewBox="0 0 18 18"><path d="M16.5 0.5 C17.5 1 17.3 2.2 16.5 3.2 L9 12.2 L6.3 10 L14 1.5 C15 0.5 16 0.2 16.5 0.5 Z M5.5 10.8 L8.2 13 C7.8 16 5 17.5 0.8 16.8 C2.8 15.5 2.5 12 5.5 10.8 Z" fill="#c4c4c4"/></svg>
<svg style="left:368px;top:24px;" width="18" height="18" viewBox="0 0 18 18"><path d="M9 0.8 A2.8 2.8 0 0 1 10.6 6 L10.2 10 H16 V13 H2 V10 H7.8 L7.4 6 A2.8 2.8 0 0 1 9 0.8 Z" fill="#c4c4c4"/><rect x="2" y="14.5" width="14" height="1.3" fill="#c4c4c4"/></svg>
<svg style="left:393px;top:24px;" width="19" height="18" viewBox="0 0 19 18"><path d="M10 0.8 L18 7 L10.5 16 L7.6 13.7 L14 6 L9.5 2.5 Z M9.5 2.5 L14 6 L7.6 13.7 L1.5 9 Z" fill="#c4c4c4"/><path d="M4 7 L10 11.8" stroke="#4a4a4a" stroke-width="1.1"/><path d="M1.5 9 L7.6 13.7 L6.2 15.4 L0.8 11 Z" fill="none" stroke="#c4c4c4" stroke-width="1"/></svg>
<svg style="left:423px;top:24px;" width="23" height="18" viewBox="0 0 23 18"><circle cx="5" cy="2.3" r="1.7" fill="#c4c4c4"/><path d="M2 5 H8.5 L9 9 L7.5 9.2 L7.2 6.8 L6.8 10.5 L9 16 L7.3 16.5 L5 11.5 L3.5 16.5 L1.8 16.2 L3.3 10 L3.2 6.8 L1.2 8.5 L0.3 7.4 Z" fill="#c4c4c4"/><path d="M20 0.5 C21 1 20.6 2 20 2.8 L14.5 10.2 L12.6 8.8 L18 1.5 C18.8 0.5 19.5 0.2 20 0.5 Z M12 9.5 L14 11 C13.5 13.5 11.5 14.5 8.5 14 C10 13 9.8 10.5 12 9.5 Z" fill="#c4c4c4"/><path d="M22.5 14 V17.5 H19 Z" fill="#c4c4c4"/></svg>
<svg style="left:455px;top:24px;" width="20" height="18" viewBox="0 0 20 18"><path d="M9 0.8 L15.5 6.8 L13.8 7.8 L12.6 7.2 L10.6 10 C11.2 11.5 10.8 12.6 10 13.4 L6.6 10.2 L1.2 15.4 L0.6 14.8 L5.6 9.2 L2.6 6.4 C3.6 5.4 4.8 5.2 6.2 5.8 L8.8 3.6 L8.2 2.4 Z" fill="#c4c4c4"/><path d="M19.5 14 V17.5 H16 Z" fill="#c4c4c4"/></svg>
<div style="left:0px;top:44.5px;width:693px;height:2.5px;background:#3c3c3c;"></div>
<div style="left:0px;top:47px;width:128px;height:173px;background:#4b4b4b;"></div>
<svg style="left:11px;top:59px;" width="7" height="7" viewBox="0 0 7 7"><path d="M0.8 0.8 L6.2 6.2 M6.2 0.8 L0.8 6.2" stroke="#9a9a9a" stroke-width="1"/></svg>
<div style="left:26px;top:55.5px;width:10.5px;height:9.5px;background:#c23a3a;"></div>
<svg style="left:46.5px;top:54.5px;" width="10" height="11" viewBox="0 0 10 11"><path d="M2.2 5 V3 a2.6 2.6 0 0 1 5.2 0" fill="none" stroke="#cfcfcf" stroke-width="1.4"/><rect x="1" y="5" width="8" height="6" fill="#cfcfcf"/><rect x="4.3" y="7" width="1.4" height="2.2" fill="#4b4b4b"/></svg>
<div style="left:64.5px;top:54px;height:17px;line-height:17px;font-size:12px;white-space:pre;color:#d8d8d8;letter-spacing:1.300px;">效果控</div>
<div style="left:105px;top:54px;height:17px;line-height:17px;font-size:12px;white-space:pre;color:#4a6a9a;width:3px;overflow:hidden;">件</div>
<div style="left:108.5px;top:52px;width:1px;height:20px;background:#454545;"></div>
<div style="left:5.5px;top:79px;height:15px;line-height:15px;font-size:10.5px;white-space:pre;color:#c8c8c8;font-family:'Liberation Mono','Noto Serif CJK SC',monospace;letter-spacing:-0.650px;">01 • Smooth skin</div>
<div style="left:1px;top:93.5px;width:127px;height:1.5px;background:#202020;"></div>
<div style="left:132.5px;top:47px;width:349px;height:173px;background:#4b4b4b;"></div>
<svg style="left:142.5px;top:59px;" width="7" height="7" viewBox="0 0 7 7"><path d="M0.8 0.8 L6.2 6.2 M6.2 0.8 L0.8 6.2" stroke="#9a9a9a" stroke-width="1"/></svg>
<div style="left:158px;top:55.5px;width:10.5px;height:9.5px;background:#b8a27c;"></div>
<svg style="left:179px;top:54.5px;" width="10" height="11" viewBox="0 0 10 11"><path d="M2.2 5 V3 a2.6 2.6 0 0 1 5.2 0" fill="none" stroke="#cfcfcf" stroke-width="1.4"/><rect x="1" y="5" width="8" height="6" fill="#cfcfcf"/><rect x="4.3" y="7" width="1.4" height="2.2" fill="#4b4b4b"/></svg>
<div style="left:196.5px;top:54px;height:17px;line-height:17px;font-size:12px;white-space:pre;color:#d8d8d8;letter-spacing:1px;">合成</div>
<div style="left:226.5px;top:54px;height:17px;line-height:17px;font-size:12px;white-space:pre;color:#3db4f5;">01</div>
<div style="left:247px;top:59.5px;width:9px;height:1px;background:#b8b8b8;"></div>
<div style="left:247px;top:62.5px;width:9px;height:1px;background:#b8b8b8;"></div>
<div style="left:247px;top:65.5px;width:9px;height:1px;background:#b8b8b8;"></div>
<div style="left:151.5px;top:77.5px;width:42px;height:16.5px;background:#424242;border:1px solid #555;border-radius:2px;"></div>
<div style="left:159px;top:78px;height:16px;line-height:16px;font-size:11.5px;white-space:pre;color:#3db4f5;">01</div>
<div style="left:132.5px;top:100px;width:349px;height:1px;background:#5e5e5e;"></div>
<div style="left:138.5px;top:107.8px;height:13px;line-height:13px;font-size:9.6px;white-space:pre;color:#c4c4c4;letter-spacing:0.900px;">活动摄像机 ( 默认 )</div>
<svg preserveAspectRatio="none" style="left:242.5px;top:106px;" width="131.5" height="87" viewBox="0 0 131 87"><defs>
<linearGradient id="aA" x1="0" y1="0" x2="0" y2="1"><stop offset="0" stop-color="#a87414"/><stop offset="0.5" stop-color="#d4a228"/><stop offset="1" stop-color="#deaa38"/></linearGradient>
<radialGradient id="aB" cx="0.5" cy="0.5" r="0.5"><stop offset="0" stop-color="#fbf3c4"/><stop offset="0.5" stop-color="#f2d870" stop-opacity="0.800"/><stop offset="1" stop-color="#e6b838" stop-opacity="0"/></radialGradient>
<linearGradient id="aC" x1="0" y1="0" x2="0" y2="1"><stop offset="0" stop-color="#e09238"/><stop offset="0.250" stop-color="#cf8a40"/><stop offset="0.500" stop-color="#947058"/><stop offset="0.800" stop-color="#8e6c54"/><stop offset="1" stop-color="#b88248"/></linearGradient>
<filter id="aF1" x="-5%" y="-5%" width="110%" height="110%"><feGaussianBlur stdDeviation="0.7"/></filter>
<filter id="aF2" x="-5%" y="-5%" width="110%" height="110%"><feGaussianBlur stdDeviation="1.6"/></filter>
<filter id="aF3" x="-5%" y="-5%" width="110%" height="110%"><feGaussianBlur stdDeviation="3"/></filter>
<filter id="aN" x="0" y="0" width="100%" height="100%"><feTurbulence type="fractalNoise" baseFrequency="0.35 0.35" numOctaves="3" seed="8"/><feColorMatrix type="matrix" values="0 0 0 0 0.45  0 0 0 0 0.25  0 0 0 0 0.02  1.3 1.3 0 0 -1.05"/></filter>
<filter id="aM" x="0" y="0" width="100%" height="100%"><feTurbulence type="fractalNoise" baseFrequency="0.25 0.5" numOctaves="2" seed="2"/><feColorMatrix type="matrix" values="0 0 0 0 0.95  0 0 0 0 0.6  0 0 0 0 0.2  1.4 1.4 0 0 -1.1"/></filter>
</defs>
<rect width="131" height="54" fill="url(#aA)"/>
<g filter="url(#aF3)"><ellipse cx="40" cy="25" rx="14" ry="14" fill="#e8c030" opacity="0.700"/>
<ellipse cx="100" cy="30" rx="22" ry="16" fill="#e6be3c" opacity="0.600"/><ellipse cx="60" cy="8" rx="40" ry="8" fill="#c89420" opacity="0.6"/><ellipse cx="65" cy="2" rx="70" ry="7" fill="#5a3a0c" opacity="0.6"/></g>
<ellipse cx="52" cy="42" rx="20" ry="13" fill="url(#aB)"/>
<rect width="131" height="54" filter="url(#aN)" opacity="0.5"/>
<ellipse cx="23" cy="42" rx="3.500" ry="9" fill="#f4ecd0" opacity="0.800" filter="url(#aF1)"/>
<g fill="#2a1a0c" filter="url(#aF1)">
<path d="M5 0 H17 C15 8 18 16 16 26 C15 36 17 44 16 53 H6 C8 42 4 32 6 22 C7 12 3 6 5 0 Z"/>
<path d="M15 12 L19 14 C20 20 22 22 24 20 L29 4 L31 5 L27 24 C24 30 23 40 22 53 H15 C16 40 17 26 15 12 Z"/>
<path d="M27 22 L30 22 L32 53 H26 Z M31 22 L34 22 L35 40 L32 40 Z" fill="#3a2a10"/>
<path d="M60 24 L63 24 L67 53 L62 53 Z" fill="#33220e"/>
<path d="M66 16 L72 16 C73 30 75 40 74 53 H68 C69 40 68 28 66 16 Z" fill="#33220e"/>
<path d="M78 4 L81 4 L83 18 L88 18 C90 30 89 42 89 53 H82 C83 40 82 28 80 18 Z"/>
<path d="M86 0 H92 L95 14 L99 12 L108 1 L111 2 L102 18 C100 28 101 40 101 53 H93 C94 40 93 28 89 18 Z"/>
<path d="M111 0 H124 C126 10 125 18 129 26 C131 34 128 44 129 53 H116 C118 44 117 34 115 26 C113 16 113 8 111 0 Z"/>
<rect x="96" y="45" width="35" height="9" fill="#3c2610" opacity="0.900"/>
<rect x="20" y="46" width="14" height="8" fill="#5a4a1c" opacity="0.700"/>
</g>
<rect y="52.500" width="131" height="34.500" fill="url(#aC)"/>
<g filter="url(#aF2)">
<ellipse cx="6" cy="50" rx="9" ry="6" fill="#c06a34" opacity="0.850"/>
<ellipse cx="98" cy="69" rx="24" ry="6" fill="#e8943c"/>
<ellipse cx="118" cy="62" rx="14" ry="5" fill="#e08a34"/>
<ellipse cx="126" cy="71" rx="6" ry="6" fill="#e08030"/>
<ellipse cx="124" cy="83" rx="9" ry="5" fill="#ea8a22"/>
<ellipse cx="40" cy="59" rx="30" ry="4" fill="#e89a3c" opacity="0.900"/>
<ellipse cx="25" cy="84" rx="22" ry="3.500" fill="#dca460" opacity="0.900"/>
<ellipse cx="62" cy="78" rx="5" ry="2" fill="#e0843a"/>
<ellipse cx="36" cy="70" rx="9" ry="2" fill="#d8a060" opacity="0.800"/>
<ellipse cx="82" cy="56" rx="30" ry="3" fill="#eaa040" opacity="0.800"/>
</g>
<rect y="53" width="131" height="34" filter="url(#aM)" opacity="0.35"/></svg>
<div style="left:132.5px;top:198.5px;width:349px;height:1px;background:#414141;"></div>
<div style="left:137px;top:201px;width:69px;height:17.5px;background:#444444;border:1px solid #5b5b5b;border-radius:3px;"></div>
<div style="left:143.5px;top:202.05px;height:16px;line-height:16px;font-size:11.2px;white-space:pre;color:#d6d6d6;letter-spacing:-0.200px;">(20%)</div>
<svg style="left:192.5px;top:207.1px;" width="9" height="5.8" viewBox="0 0 9 5.8"><path d="M1 1 L4.5 4.8 L8 1" fill="none" stroke="#d0d0d0" stroke-width="1.3"/></svg>
<div style="left:211px;top:202.5px;width:1px;height:15px;background:#5c5c5c;"></div>
<div style="left:216.5px;top:201px;width:84.5px;height:17.5px;background:#444444;border:1px solid #5b5b5b;border-radius:3px;"></div>
<div style="left:224px;top:201.55px;height:17px;line-height:17px;font-size:12px;white-space:pre;color:#d6d6d6;letter-spacing:2px;">完整</div>
<svg style="left:287.5px;top:207.1px;" width="9" height="5.8" viewBox="0 0 9 5.8"><path d="M1 1 L4.5 4.8 L8 1" fill="none" stroke="#d0d0d0" stroke-width="1.3"/></svg>
<div style="left:306.5px;top:202.5px;width:1px;height:15px;background:#5c5c5c;"></div>
<svg style="left:316.5px;top:203.5px;" width="15" height="13" viewBox="0 0 15 13"><rect x="0.700" y="0.700" width="13" height="10.500" fill="none" stroke="#d0d0d0" stroke-width="1.2"/><path d="M8.500 2 L4.500 6.500 H7 L5.500 10 L10 5.500 H7.500 Z" fill="#d0d0d0"/><path d="M10.500 10 H14.500 L12.500 12.500 Z" fill="#d0d0d0"/></svg>
<svg style="left:337.5px;top:204px;" width="15" height="12" viewBox="0 0 15 12"><rect x="0.600" y="0.600" width="13.800" height="10.800" fill="none" stroke="#d0d0d0" stroke-width="1.2"/><rect x="1.5" y="1.5" width="3" height="3" fill="#9a9a9a"/><rect x="1.5" y="7.5" width="3" height="3" fill="#9a9a9a"/><rect x="4.5" y="4.5" width="3" height="3" fill="#9a9a9a"/><rect x="7.5" y="1.5" width="3" height="3" fill="#9a9a9a"/><rect x="7.5" y="7.5" width="3" height="3" fill="#9a9a9a"/><rect x="10.5" y="4.5" width="3" height="3" fill="#9a9a9a"/></svg>
<div style="left:356px;top:201px;width:21px;height:18px;background:#3e3e3e;border:1px solid #565656;border-radius:2px;"></div>
<svg style="left:358.5px;top:202.5px;" width="17" height="15" viewBox="0 0 17 15"><path d="M3 4 L13.500 2 L12.500 12 L2.500 11.500 Z" fill="none" stroke="#3db4f5" stroke-width="1.500"/><rect x="1" y="9.800" width="3" height="3" fill="#3db4f5"/><rect x="11.300" y="10.300" width="3" height="3" fill="#3db4f5"/><rect x="12" y="0.500" width="3" height="3" fill="#3db4f5"/><rect x="1.600" y="2.600" width="3" height="3" fill="#3db4f5"/></svg>
<svg style="left:381.5px;top:204px;" width="15" height="12" viewBox="0 0 15 12"><rect x="0.700" y="0.700" width="13.600" height="10.600" fill="none" stroke="#d0d0d0" stroke-width="1.300"/><rect x="3.500" y="3.500" width="8" height="5" fill="#d0d0d0"/></svg>
<svg style="left:402px;top:202.5px;" width="16" height="16" viewBox="0 0 16 16"><rect x="1.500" y="2" width="12" height="9" fill="none" stroke="#d0d0d0" stroke-width="1.200"/><path d="M7.500 0 V4 M7.500 9 V13 M0 6.500 H4 M11 6.500 H15" stroke="#d0d0d0" stroke-width="1.200"/><path d="M9.500 13.500 H14.500 L12 16 Z" fill="#d0d0d0"/></svg>
<div style="left:425.5px;top:202.5px;width:1px;height:15px;background:#5c5c5c;"></div>
<svg style="left:435px;top:202px;" width="15" height="16" viewBox="0 0 15 16"><circle cx="7" cy="4" r="3.200" fill="#e02020"/><circle cx="4" cy="8.500" r="3.200" fill="#20c040"/><circle cx="10" cy="8.500" r="3.200" fill="#3060e8"/><path d="M9.500 13 H14.500 L12 15.500 Z" fill="#d0d0d0"/></svg>
<svg style="left:457px;top:203.5px;" width="13" height="13" viewBox="0 0 13 13"><circle cx="6.500" cy="6.500" r="5.200" fill="none" stroke="#d0d0d0" stroke-width="2.200"/><path d="M6.500 1 L9 6 M12 6.500 L7 9 M6.500 12 L4 7 M1 6.500 L6 4" stroke="#4b4b4b" stroke-width="1"/></svg>
<div style="left:476.5px;top:202.5px;height:15px;line-height:15px;font-size:11px;white-space:pre;color:#3db4f5;">+</div>
<div style="left:486.5px;top:47px;width:206.5px;height:87px;background:#4b4b4b;"></div>
<div style="left:486.5px;top:46px;width:206.5px;height:90px;background:#4b4b4b;"></div>
<div style="left:500px;top:53.5px;height:17px;line-height:17px;font-size:12px;white-space:pre;color:#d8d8d8;letter-spacing:1px;">字符</div>
<div style="left:537px;top:59px;width:9px;height:1px;background:#b8b8b8;"></div>
<div style="left:537px;top:62px;width:9px;height:1px;background:#b8b8b8;"></div>
<div style="left:537px;top:65px;width:9px;height:1px;background:#b8b8b8;"></div>
<div style="left:492px;top:83.5px;width:121px;height:18px;background:#444444;border:1px solid #5b5b5b;border-radius:3px;"></div>
<div style="left:594px;top:84.5px;width:1px;height:16px;background:#5b5b5b;"></div>
<div style="left:499px;top:84.8px;height:16px;line-height:16px;font-size:11.2px;white-space:pre;color:#e6e6e6;letter-spacing:-0.300px;">Arial</div>
<svg style="left:599px;top:89.6px;" width="9" height="5.8" viewBox="0 0 9 5.8"><path d="M1 1 L4.5 4.8 L8 1" fill="none" stroke="#d0d0d0" stroke-width="1.3"/></svg>
<div style="left:492px;top:107.5px;width:121px;height:18px;background:#444444;border:1px solid #5b5b5b;border-radius:3px;"></div>
<div style="left:594px;top:108.5px;width:1px;height:16px;background:#5b5b5b;"></div>
<div style="left:499px;top:108.8px;height:16px;line-height:16px;font-size:11.2px;white-space:pre;color:#e6e6e6;letter-spacing:-0.300px;">Regular</div>
<svg style="left:599px;top:114.1px;" width="9" height="5.8" viewBox="0 0 9 5.8"><path d="M1 1 L4.5 4.8 L8 1" fill="none" stroke="#d0d0d0" stroke-width="1.3"/></svg>
<svg style="left:618px;top:85px;" width="20" height="20" viewBox="0 0 20 20"><path d="M13.500 1 C15 -0.200 17.500 1.500 17 3.500 L15.500 5.500 L16.500 6.500 L14.800 8.200 L11 4.400 L12.700 2.700 Z" fill="#cfcfcf"/><path d="M11.500 6 L3 14.500 L2 17.500 L5 16.500 L13.500 8" fill="none" stroke="#cfcfcf" stroke-width="1.300"/></svg>
<div style="left:617.5px;top:108.5px;width:20.5px;height:16.5px;background:#fff;border:1px solid #8a8a8a;"></div>
<div style="left:618.5px;top:109.5px;width:18.5px;height:6.5px;background:#000;"></div>
<div style="left:654px;top:96.5px;width:29.5px;height:28.5px;background:#fff;border:1px solid #2a2a2a;"></div>
<div style="left:662px;top:104.5px;width:13.5px;height:12.5px;background:#3c3c3c;"></div>
<svg style="left:654px;top:96.5px;" width="29.5" height="28.5" viewBox="0 0 29.5 28.5"><path d="M1 27.500 L28.500 1" stroke="#e01616" stroke-width="2"/></svg>
<div style="left:641.5px;top:83.5px;width:29px;height:28.5px;background:#fff;border:1px solid #2a2a2a;"></div>
<div style="left:641.5px;top:113px;width:11.5px;height:11.5px;background:#fff;border:1px solid #2a2a2a;"></div>
<svg style="left:641.5px;top:113px;" width="11.5" height="11.5" viewBox="0 0 11.5 11.5"><path d="M1 10.5 L10.5 1" stroke="#e01616" stroke-width="1"/></svg>
<svg style="left:672px;top:85px;" width="11" height="11" viewBox="0 0 11 11"><path d="M2 2.500 C6 1.500 8.500 4 8 8" fill="none" stroke="#d0d0d0" stroke-width="1.300"/><path d="M0.500 2.500 L3.500 0.500 V4.500 Z M8 10.500 L5.800 7.500 H10.200 Z" fill="#d0d0d0"/></svg>
<div style="left:491px;top:131.5px;width:192px;height:1px;background:#565656;"></div>
<div style="left:486.5px;top:138px;width:206.5px;height:82px;background:#4b4b4b;"></div>
<div style="left:500px;top:145px;height:17px;line-height:17px;font-size:12px;white-space:pre;color:#d8d8d8;letter-spacing:1px;">段落</div>
<div style="left:537px;top:150.5px;width:9px;height:1px;background:#b8b8b8;"></div>
<div style="left:537px;top:153.5px;width:9px;height:1px;background:#b8b8b8;"></div>
<div style="left:537px;top:156.5px;width:9px;height:1px;background:#b8b8b8;"></div>
<div style="left:493px;top:169.6px;width:21.5px;height:21.5px;background:#3e3e3e;border:1px solid #585858;border-radius:2px;"></div>
<svg style="left:495.8px;top:173.9px;" width="15" height="14" viewBox="0 0 15 14"><rect x="0" y="0" width="15" height="1.100" fill="#4ab4f0"/><rect x="0" y="3.05" width="12" height="1.100" fill="#4ab4f0"/><rect x="0" y="6.1" width="15" height="1.100" fill="#4ab4f0"/><rect x="0" y="9.15" width="12" height="1.100" fill="#4ab4f0"/><rect x="0" y="12.2" width="15" height="1.100" fill="#4ab4f0"/></svg>
<svg style="left:519.4px;top:173.9px;" width="15" height="14" viewBox="0 0 15 14"><rect x="0" y="0" width="15" height="1.100" fill="#c6c6c6"/><rect x="2" y="3.05" width="11" height="1.100" fill="#c6c6c6"/><rect x="0" y="6.1" width="15" height="1.100" fill="#c6c6c6"/><rect x="2" y="9.15" width="11" height="1.100" fill="#c6c6c6"/><rect x="0" y="12.2" width="15" height="1.100" fill="#c6c6c6"/></svg>
<svg style="left:544.1px;top:173.9px;" width="15" height="14" viewBox="0 0 15 14"><rect x="0" y="0" width="15" height="1.100" fill="#c6c6c6"/><rect x="3" y="3.05" width="12" height="1.100" fill="#c6c6c6"/><rect x="0" y="6.1" width="15" height="1.100" fill="#c6c6c6"/><rect x="3" y="9.15" width="12" height="1.100" fill="#c6c6c6"/><rect x="0" y="12.2" width="15" height="1.100" fill="#c6c6c6"/></svg>
<svg style="left:574.5px;top:173.9px;" width="15" height="14" viewBox="0 0 15 14"><rect x="0" y="0" width="15" height="1.100" fill="#c6c6c6"/><rect x="0" y="3.05" width="15" height="1.100" fill="#c6c6c6"/><rect x="0" y="6.1" width="15" height="1.100" fill="#c6c6c6"/><rect x="0" y="9.15" width="15" height="1.100" fill="#c6c6c6"/><rect x="0" y="12.2" width="10" height="1.100" fill="#c6c6c6"/></svg>
<svg style="left:598.9px;top:173.9px;" width="15" height="14" viewBox="0 0 15 14"><rect x="0" y="0" width="15" height="1.100" fill="#c6c6c6"/><rect x="0" y="3.05" width="15" height="1.100" fill="#c6c6c6"/><rect x="0" y="6.1" width="15" height="1.100" fill="#c6c6c6"/><rect x="0" y="9.15" width="15" height="1.100" fill="#c6c6c6"/><rect x="3" y="12.2" width="9" height="1.100" fill="#c6c6c6"/></svg>
<svg style="left:623.4px;top:173.9px;" width="15" height="14" viewBox="0 0 15 14"><rect x="0" y="0" width="15" height="1.100" fill="#c6c6c6"/><rect x="0" y="3.05" width="15" height="1.100" fill="#c6c6c6"/><rect x="0" y="6.1" width="15" height="1.100" fill="#c6c6c6"/><rect x="0" y="9.15" width="15" height="1.100" fill="#c6c6c6"/><rect x="5" y="12.2" width="10" height="1.100" fill="#c6c6c6"/></svg>
<svg style="left:653.8px;top:173.9px;" width="15" height="14" viewBox="0 0 15 14"><rect x="0" y="0" width="15" height="1.100" fill="#c6c6c6"/><rect x="0" y="3.05" width="15" height="1.100" fill="#c6c6c6"/><rect x="0" y="6.1" width="15" height="1.100" fill="#c6c6c6"/><rect x="0" y="9.15" width="15" height="1.100" fill="#c6c6c6"/><rect x="0" y="12.2" width="15" height="1.100" fill="#c6c6c6"/></svg>
<div style="left:493px;top:197.1px;width:165px;height:1px;background:#5a5a5a;"></div>
<svg style="left:493px;top:202.5px;" width="16" height="14.5" viewBox="0 0 16 14.5"><path d="M0 6.500 H4.500 M3 4.500 L5 6.500 L3 8.500" fill="none" stroke="#cfcfcf" stroke-width="1.100"/><path d="M7.500 0 V13" stroke="#cfcfcf" stroke-width="1.100"/><path d="M9 2.500 H15 M9 5.200 H13.500 M9 7.900 H15 M9 10.600 H13.500" stroke="#cfcfcf" stroke-width="1.100"/></svg>
<div style="left:514px;top:198.5px;height:18px;line-height:18px;font-size:12.5px;white-space:pre;color:#3db4f5;">0</div>
<div style="left:525px;top:201px;height:17px;line-height:17px;font-size:12px;white-space:pre;color:#c0c0c0;letter-spacing:1px;">像素</div>
<svg style="left:564px;top:202.5px;" width="16" height="14.5" viewBox="0 0 16 14.5"><path d="M0 3.500 H4 M2.500 1.500 L4.500 3.500 L2.500 5.500" fill="none" stroke="#cfcfcf" stroke-width="1.100"/><rect x="6.500" y="1" width="8.500" height="4" fill="none" stroke="#cfcfcf" stroke-width="1.100"/><path d="M4 8 H15 M6 10.600 H13 M6 13.200 H13" stroke="#cfcfcf" stroke-width="1.100"/></svg>
<div style="left:586px;top:198.5px;height:18px;line-height:18px;font-size:12.5px;white-space:pre;color:#3db4f5;">0</div>
<div style="left:596.5px;top:201px;height:17px;line-height:17px;font-size:12px;white-space:pre;color:#c0c0c0;letter-spacing:1px;">像素</div>
<svg style="left:630px;top:200.5px;" width="16" height="14.5" viewBox="0 0 16 14.5"><path d="M0 2.500 H4 M2.500 0.500 L4.500 2.500 L2.500 4.500" fill="none" stroke="#cfcfcf" stroke-width="1.100"/><path d="M6 2.500 H15 M4 5.200 H15 M6 7.900 H13.500 M6 10.600 H13.500 M6 13.300 H13.500" stroke="#cfcfcf" stroke-width="1.100"/></svg>
<div style="left:650.5px;top:198.5px;height:18px;line-height:18px;font-size:12.5px;white-space:pre;color:#3db4f5;">0</div>
<div style="left:661px;top:201px;height:17px;line-height:17px;font-size:12px;white-space:pre;color:#c0c0c0;letter-spacing:1px;">像素</div>
<div style="left:514px;top:216px;height:17px;line-height:17px;font-size:12px;white-space:pre;color:#3db4f5;height:4px;overflow:hidden;line-height:16px;top:216px;">-</div>
<div style="left:525.5px;top:216px;height:17px;line-height:17px;font-size:12px;white-space:pre;color:#a0a0a0;letter-spacing:1px;height:4px;overflow:hidden;line-height:14px;top:216px;">像素</div>
<div style="left:0px;top:224px;width:161px;height:220px;background:#4b4b4b;border:1px solid #3a6f96;"></div>
<div style="left:14px;top:230px;height:17px;line-height:17px;font-size:12px;white-space:pre;color:#d8d8d8;letter-spacing:1px;">项目</div>
<div style="left:49.5px;top:235.5px;width:9px;height:1px;background:#b8b8b8;"></div>
<div style="left:49.5px;top:238.5px;width:9px;height:1px;background:#b8b8b8;"></div>
<div style="left:49.5px;top:241.5px;width:9px;height:1px;background:#b8b8b8;"></div>
<div style="left:7.5px;top:362.5px;width:147.5px;height:18px;background:#434343;border:1px solid #595959;border-radius:3px;"></div>
<svg style="left:14px;top:366px;" width="16" height="12" viewBox="0 0 16 12"><circle cx="6.5" cy="4.5" r="3.4" fill="none" stroke="#c8c8c8" stroke-width="1.3"/><path d="M4.3 7.3 L1 11" stroke="#c8c8c8" stroke-width="1.4"/><path d="M10.5 8 H15.5 L13 10.8 Z" fill="#c8c8c8"/></svg>
<div style="left:1px;top:386.5px;width:159px;height:1.5px;background:#242424;"></div>
<div style="left:1px;top:388px;width:159px;height:18px;background:#747474;"></div>
<div style="left:15px;top:391px;width:1px;height:12px;background:#4a4a4a;"></div>
<div style="left:16px;top:391px;width:1px;height:12px;background:#8a8a8a;"></div>
<div style="left:22.5px;top:388.5px;height:17px;line-height:17px;font-size:12px;white-space:pre;color:#d2d2d2;letter-spacing:1.500px;">名称</div>
<svg style="left:101px;top:393.5px;" width="13" height="7" viewBox="0 0 13 7"><path d="M0.300 6.500 L6.500 0.800 L12.700 6.500 Z" fill="#48c4fa"/></svg>
<div style="left:117px;top:391px;width:1px;height:12px;background:#4a4a4a;"></div>
<div style="left:118px;top:391px;width:1px;height:12px;background:#8a8a8a;"></div>
<svg style="left:121px;top:390.5px;" width="15" height="13" viewBox="0 0 15 13"><path d="M1 1 H7 L14 8 L8.600 12.500 L1 5.500 Z" fill="#d0d0d0"/></svg>
<div style="left:138.5px;top:391px;width:1px;height:12px;background:#4a4a4a;"></div>
<div style="left:139.5px;top:391px;width:1px;height:12px;background:#8a8a8a;"></div>
<div style="left:144px;top:388.5px;height:17px;line-height:17px;font-size:12px;white-space:pre;color:#d2d2d2;width:15px;overflow:hidden;">类</div>
<div style="left:1px;top:406px;width:159px;height:1.5px;background:#242424;"></div>
<div style="left:143.5px;top:407.5px;width:16.5px;height:19.5px;background:#454545;"></div>
<svg preserveAspectRatio="none" style="left:16.5px;top:409.5px;" width="17.5" height="14" viewBox="0 0 18 16"><rect x="0.5" y="1" width="17" height="14" fill="#c4c4c4"/><rect x="3" y="2.5" width="12" height="11" fill="#e2e2e2"/><path d="M1 2.500 H2.500 M1 5 H2.500 M1 7.500 H2.500 M1 10 H2.500 M1 12.500 H2.500 M15.500 2.500 H17 M15.500 5 H17 M15.500 7.500 H17 M15.500 10 H17 M15.500 12.500 H17" stroke="#555" stroke-width="1.200"/><circle cx="7" cy="6.500" r="2.800" fill="#2a62c8"/><rect x="8" y="6" width="5.500" height="5" fill="#d03030"/><path d="M4 12.500 L7 8 L10 12.500 Z" fill="#2a9a3a"/></svg>
<div style="left:36px;top:410px;height:15px;line-height:15px;font-size:11px;white-space:pre;color:#dcdcdc;font-family:'Liberation Serif','Noto Serif CJK SC',serif;">01</div>
<div style="left:122px;top:412px;width:10.5px;height:9.5px;background:#b8a27c;"></div>
<svg style="left:145.5px;top:410.5px;" width="13" height="12" viewBox="0 0 13 12"><path d="M4.5 0.5 H8.5 V4.5 H7 V6 H11.5 V8 H12.5 V11.5 H8.5 V8 H10 V7.2 H3 V8 H4.500 V11.5 H0.5 V8 H1.5 V6 H6 V4.500 H4.500 Z" fill="#d6d6d6"/></svg>
<div style="left:1px;top:426.5px;width:142.5px;height:1px;background:#3c3c3c;"></div>
<div style="left:19px;top:427.5px;width:11px;height:1.5px;background:#e6f1fb;"></div>
<svg style="left:4px;top:430.5px;" width="18" height="13" viewBox="0 0 18 13"><rect x="4" y="1" width="13" height="8" fill="#cfcfcf"/><rect x="6" y="3" width="8" height="1.5" fill="#4b4b4b"/><rect x="1" y="5" width="6" height="7.5" fill="#cfcfcf" stroke="#4b4b4b" stroke-width="0.8"/><path d="M2 7.5 H6 M2 9.5 H6" stroke="#4b4b4b" stroke-width="0.8"/></svg>
<svg style="left:30.5px;top:431px;" width="15" height="12" viewBox="0 0 15 12"><path d="M0.5 2.500 H5.5 L6.5 1 H13.500 V11 H0.500 Z" fill="#cfcfcf"/><path d="M0.5 3.6 H13.5" stroke="#4b4b4b" stroke-width="0.7"/></svg>
<svg preserveAspectRatio="none" style="left:53px;top:430px;" width="18" height="14" viewBox="0 0 18 16"><rect x="0.5" y="1" width="17" height="14" fill="#c4c4c4"/><rect x="3" y="2.5" width="12" height="11" fill="#e2e2e2"/><path d="M1 2.500 H2.500 M1 5 H2.500 M1 7.500 H2.500 M1 10 H2.500 M1 12.500 H2.500 M15.500 2.500 H17 M15.500 5 H17 M15.500 7.500 H17 M15.500 10 H17 M15.500 12.500 H17" stroke="#555" stroke-width="1.200"/><circle cx="7" cy="6.500" r="2.800" fill="#2a62c8"/><rect x="8" y="6" width="5.500" height="5" fill="#d03030"/><path d="M4 12.500 L7 8 L10 12.500 Z" fill="#2a9a3a"/></svg>
<svg style="left:79.5px;top:430.5px;" width="18" height="14" viewBox="0 0 18 14"><path d="M1 7 L9 1.500 L11.500 2.500 L4 8.500 Z M3 10 L10.500 4.500 L11.500 7 L5 11 Z" fill="#8a8a8a"/><circle cx="12.5" cy="9" r="3.300" fill="none" stroke="#8a8a8a" stroke-width="1.3"/><rect x="11.900" y="5" width="1.3" height="4" fill="#8a8a8a"/></svg>
<div style="left:101px;top:429px;width:48px;height:15px;background:#464646;border:1px solid #525252;"></div>
<div style="left:113.5px;top:430.5px;height:13px;line-height:13px;font-size:9.5px;white-space:pre;color:#a8a8a8;letter-spacing:-0.200px;">8 bpc</div>
<svg style="left:155px;top:430.5px;" width="5" height="12" viewBox="0 0 5 12"><path d="M1 2 H5 M1.500 2 V11 H5" fill="none" stroke="#cfcfcf" stroke-width="1.300"/></svg>
<div style="left:165.5px;top:224px;width:316px;height:221px;background:#4b4b4b;"></div>
<svg style="left:175.5px;top:235px;" width="7" height="7" viewBox="0 0 7 7"><path d="M0.8 0.8 L6.2 6.2 M6.2 0.8 L0.8 6.2" stroke="#9a9a9a" stroke-width="1"/></svg>
<div style="left:191px;top:232.5px;width:10.5px;height:9.5px;background:#b8a27c;"></div>
<div style="left:211.5px;top:230px;height:16px;line-height:16px;font-size:11.5px;white-space:pre;color:#f0f0f0;">01</div>
<div style="left:234px;top:235.5px;width:9px;height:1px;background:#d0d0d0;"></div>
<div style="left:234px;top:238.5px;width:9px;height:1px;background:#d0d0d0;"></div>
<div style="left:234px;top:241.5px;width:9px;height:1px;background:#d0d0d0;"></div>
<div style="left:188.5px;top:254px;height:20px;line-height:20px;font-size:14.6px;white-space:pre;color:#4cc0f6;font-weight:bold;letter-spacing:-0.050px;">0:00:05:12</div>
<div style="left:175.5px;top:272px;height:15px;line-height:15px;font-size:10.5px;white-space:pre;color:#2a7ab8;font-family:'Liberation Mono','Noto Serif CJK SC',monospace;letter-spacing:-0.750px;">00137 (25.00 fps)</div>
<svg style="left:314px;top:262px;" width="18" height="14" viewBox="0 0 18 14"><rect x="0" y="2" width="6" height="2" fill="#cfcfcf"/><path d="M5 3 H9 V10 H12 M9 6.500 H12" fill="none" stroke="#cfcfcf" stroke-width="1.100"/><rect x="11.500" y="5" width="4" height="3" fill="#cfcfcf"/><rect x="11.500" y="8.500" width="4" height="3" fill="#cfcfcf"/><path d="M12 12.500 H16 L14 14 Z" fill="#cfcfcf"/></svg>
<svg style="left:347px;top:262px;" width="18" height="14" viewBox="0 0 18 14"><path d="M2 8 C2 2 16 2 16 8 Z" fill="#cfcfcf"/><rect x="8.200" y="0.500" width="1.600" height="3" fill="#cfcfcf"/><rect x="1" y="9" width="16" height="4.500" fill="#cfcfcf" opacity="0.550"/><rect x="7" y="5" width="4" height="6" fill="#cfcfcf"/></svg>
<svg style="left:374px;top:261.5px;" width="17" height="15" viewBox="0 0 17 15"><rect x="4.500" y="0.500" width="12" height="11.500" fill="#cfcfcf"/><path d="M5.500 2 V11 M15.500 2 V11" stroke="#4b4b4b" stroke-width="1.200" stroke-dasharray="1.300 1.300"/><rect x="0.500" y="4" width="12" height="10.500" fill="#cfcfcf" stroke="#4b4b4b" stroke-width="0.800"/><path d="M2 6 H11 M2 8.500 H11 M2 11 H11" stroke="#4b4b4b" stroke-width="0.800"/></svg>
<svg style="left:399px;top:261.5px;" width="19" height="16" viewBox="0 0 19 16"><ellipse cx="11" cy="6" rx="6.500" ry="5.500" fill="#cfcfcf"/><ellipse cx="9" cy="8" rx="6.500" ry="5.500" fill="#a8a8a8" stroke="#4b4b4b" stroke-width="0.800"/><ellipse cx="7.500" cy="10" rx="6.500" ry="5.500" fill="none" stroke="#cfcfcf" stroke-width="1"/></svg>
<svg style="left:433px;top:261px;" width="18" height="17" viewBox="0 0 18 17"><rect x="1.500" y="3.500" width="15" height="12.500" fill="none" stroke="#cfcfcf" stroke-width="1.200"/><path d="M1.500 5 H6 C9 5 9 15 16 15" fill="none" stroke="#cfcfcf" stroke-width="1.200"/><path d="M4 0.500 V3.500 M8.500 0.500 V3.500 M13 0.500 V3.500" stroke="#cfcfcf" stroke-width="1.200"/></svg>
<div style="left:465.5px;top:254px;width:1px;height:191px;background:#3a3a3a;"></div>
<div style="left:165.5px;top:286.5px;width:316px;height:1.5px;background:#3a3a3a;"></div>
<div style="left:165.5px;top:288px;width:300px;height:17.5px;background:#757575;"></div>
<div style="left:165.5px;top:305.5px;width:316px;height:1.5px;background:#2a2a2a;"></div>
<svg style="left:171px;top:293.5px;" width="11" height="8" viewBox="0 0 11 8"><path d="M0.500 4 C3 0.300 8 0.300 10.500 4 C8 7.700 3 7.700 0.500 4 Z" fill="#e0e0e0"/><circle cx="5.500" cy="4" r="2.100" fill="#777"/><circle cx="5.500" cy="4" r="0.900" fill="#e0e0e0"/></svg>
<svg style="left:184.5px;top:292.5px;" width="11" height="10" viewBox="0 0 11 10"><path d="M0.500 3.500 H2.500 L5.500 0.500 V9.500 L2.500 6.500 H0.500 Z" fill="#e0e0e0"/><path d="M7 2.500 C8.500 4 8.500 6 7 7.500 M8.500 1 C11 3.500 11 6.500 8.500 9" fill="none" stroke="#e0e0e0" stroke-width="1"/></svg>
<svg style="left:199.5px;top:294.5px;" width="6" height="6" viewBox="0 0 6 6"><circle cx="3" cy="3" r="2.700" fill="#e0e0e0"/></svg>
<svg style="left:211.5px;top:291.5px;" width="10" height="11" viewBox="0 0 10 11"><path d="M2.200 5 V3.400 a2.800 2.800 0 0 1 5.600 0 V5" fill="none" stroke="#e0e0e0" stroke-width="1.400"/><rect x="1" y="5" width="8" height="6" fill="#e0e0e0"/><rect x="4.300" y="7" width="1.400" height="2.200" fill="#666"/></svg>
<svg style="left:246.5px;top:290.5px;" width="15" height="13" viewBox="0 0 15 13"><path d="M1 1 H7 L14 8 L8.600 12.500 L1 5.500 Z" fill="#e0e0e0"/></svg>
<div style="left:233px;top:291px;width:1px;height:12px;background:#606060;"></div>
<div style="left:234px;top:291px;width:1px;height:12px;background:#858585;"></div>
<div style="left:265px;top:291px;width:1px;height:12px;background:#606060;"></div>
<div style="left:266px;top:291px;width:1px;height:12px;background:#858585;"></div>
<div style="left:296px;top:291px;width:1px;height:12px;background:#606060;"></div>
<div style="left:297px;top:291px;width:1px;height:12px;background:#858585;"></div>
<div style="left:397.5px;top:291px;width:1px;height:12px;background:#606060;"></div>
<div style="left:398.5px;top:291px;width:1px;height:12px;background:#858585;"></div>
<div style="left:270.5px;top:290.5px;height:14px;line-height:14px;font-size:10px;white-space:pre;color:#e0e0e0;font-family:'Liberation Mono','Noto Serif CJK SC',monospace;">#</div>
<div style="left:303px;top:289px;height:17px;line-height:17px;font-size:12px;white-space:pre;color:#d0d0d0;letter-spacing:1.500px;">源名称</div>
<div style="left:404.5px;top:289px;height:17px;line-height:17px;font-size:12px;white-space:pre;color:#d0d0d0;letter-spacing:1.500px;">模式</div>
<div style="left:165.5px;top:307px;width:300px;height:20px;background:#656565;"></div>
<div style="left:169.5px;top:307.5px;width:13.5px;height:14.5px;background:#3e3e3e;"></div>
<svg style="left:170.5px;top:311px;" width="11" height="8" viewBox="0 0 11 8"><path d="M0.500 4 C3 0.300 8 0.300 10.500 4 C8 7.700 3 7.700 0.500 4 Z" fill="#ececec"/><circle cx="5.500" cy="4" r="2.100" fill="#2e2e2e"/><circle cx="5.500" cy="4" r="0.900" fill="#ececec"/></svg>
<div style="left:199.5px;top:307.5px;width:14px;height:14.5px;background:#444;"></div>
<div style="left:215px;top:307.5px;width:12.5px;height:14.5px;background:#444;"></div>
<svg style="left:238.5px;top:312px;" width="6" height="9" viewBox="0 0 6 9"><path d="M1.300 1.200 L4.500 4.500 L1.300 7.800" fill="none" stroke="#e4e4e4" stroke-width="1.300"/></svg>
<div style="left:249.5px;top:307.5px;width:15.5px;height:15px;background:#b83838;"></div>
<div style="left:270.5px;top:309px;height:17px;line-height:17px;font-size:12px;white-space:pre;color:#f0f0f0;font-family:'Liberation Serif','Noto Serif CJK SC',serif;">1</div>
<div style="left:302.5px;top:305px;height:20px;line-height:20px;font-size:14px;white-space:pre;color:#e4e4e4;font-family:'Liberation Serif','Noto Serif CJK SC',serif;">T</div>
<div style="left:322px;top:311.3px;height:15px;line-height:15px;font-size:10.8px;white-space:pre;color:#f4f4f4;font-family:'Liberation Mono','Noto Serif CJK SC',monospace;letter-spacing:-0.550px;">Smooth ...</div>
<div style="left:400.5px;top:307.5px;width:65px;height:16px;background:#484848;"></div>
<div style="left:407.5px;top:309.3px;height:15px;line-height:15px;font-size:11px;white-space:pre;color:#dcdcdc;letter-spacing:1px;font-weight:300;">正常</div>
<svg style="left:456px;top:312.5px;" width="9" height="6" viewBox="0 0 9 6"><path d="M1 1 L4.5 5 L8 1" fill="none" stroke="#e8e8e8" stroke-width="1.3"/></svg>
<div style="left:165.5px;top:326.7px;width:300px;height:20px;background:#656565;"></div>
<div style="left:169.5px;top:327.2px;width:13.5px;height:14.5px;background:#3e3e3e;"></div>
<svg style="left:170.5px;top:330.7px;" width="11" height="8" viewBox="0 0 11 8"><path d="M0.500 4 C3 0.300 8 0.300 10.500 4 C8 7.700 3 7.700 0.500 4 Z" fill="#ececec"/><circle cx="5.500" cy="4" r="2.100" fill="#2e2e2e"/><circle cx="5.500" cy="4" r="0.900" fill="#ececec"/></svg>
<div style="left:199.5px;top:327.2px;width:14px;height:14.5px;background:#444;"></div>
<div style="left:215px;top:327.2px;width:12.5px;height:14.5px;background:#444;"></div>
<svg style="left:238.5px;top:331.7px;" width="6" height="9" viewBox="0 0 6 9"><path d="M1.300 1.200 L4.500 4.500 L1.300 7.800" fill="none" stroke="#e4e4e4" stroke-width="1.300"/></svg>
<div style="left:249.5px;top:327.2px;width:15.5px;height:15px;background:#aeaad0;"></div>
<div style="left:270.5px;top:328.7px;height:17px;line-height:17px;font-size:12px;white-space:pre;color:#f0f0f0;font-family:'Liberation Serif','Noto Serif CJK SC',serif;">2</div>
<svg style="left:299.5px;top:326.7px;" width="17" height="17" viewBox="0 0 17 17"><path d="M2.500 2.500 H11 L15.500 7 V17.500 H2.500 Z" fill="#e6f1fb"/><path d="M11 2.500 L15.500 7 H11 Z" fill="#b4cfe8"/><rect x="0" y="0.500" width="11.500" height="6" rx="1.200" fill="#2d8ceb"/><path d="M2 3.500 H4.500 M5.500 3.500 H7 M8 3.500 H9.500" stroke="#cfe6ff" stroke-width="1.100"/><path d="M5 12 H8 V15 H5 Z M9.500 9.500 H12.500 V12.500 H9.500 Z" fill="#bcd8f2"/></svg>
<div style="left:322px;top:331px;height:15px;line-height:15px;font-size:10.8px;white-space:pre;color:#f4f4f4;font-family:'Liberation Mono','Noto Serif CJK SC',monospace;letter-spacing:-0.550px;">02.jpg</div>
<div style="left:400.5px;top:327.2px;width:65px;height:16px;background:#484848;"></div>
<div style="left:407.5px;top:329px;height:15px;line-height:15px;font-size:11px;white-space:pre;color:#dcdcdc;letter-spacing:1px;font-weight:300;">正常</div>
<svg style="left:456px;top:332.2px;" width="9" height="6" viewBox="0 0 9 6"><path d="M1 1 L4.5 5 L8 1" fill="none" stroke="#e8e8e8" stroke-width="1.3"/></svg>
<div style="left:165.5px;top:346.4px;width:300px;height:20px;background:#656565;"></div>
<div style="left:169.5px;top:346.9px;width:13.5px;height:14.5px;background:#3e3e3e;"></div>
<svg style="left:170.5px;top:350.4px;" width="11" height="8" viewBox="0 0 11 8"><path d="M0.500 4 C3 0.300 8 0.300 10.500 4 C8 7.700 3 7.700 0.500 4 Z" fill="#ececec"/><circle cx="5.500" cy="4" r="2.100" fill="#2e2e2e"/><circle cx="5.500" cy="4" r="0.900" fill="#ececec"/></svg>
<div style="left:199.5px;top:346.9px;width:14px;height:14.5px;background:#444;"></div>
<div style="left:215px;top:346.9px;width:12.5px;height:14.5px;background:#444;"></div>
<svg style="left:238.5px;top:351.4px;" width="6" height="9" viewBox="0 0 6 9"><path d="M1.300 1.200 L4.500 4.500 L1.300 7.800" fill="none" stroke="#e4e4e4" stroke-width="1.300"/></svg>
<div style="left:249.5px;top:346.9px;width:15.5px;height:15px;background:#b83838;"></div>
<div style="left:270.5px;top:348.4px;height:17px;line-height:17px;font-size:12px;white-space:pre;color:#f0f0f0;font-family:'Liberation Serif','Noto Serif CJK SC',serif;">3</div>
<div style="left:299.5px;top:346.9px;width:17px;height:16px;background:#000;"></div>
<div style="left:322px;top:350.7px;height:15px;line-height:15px;font-size:10.8px;white-space:pre;color:#f4f4f4;font-family:'Liberation Mono','Noto Serif CJK SC',monospace;letter-spacing:-0.550px;">黑色 纯色 1</div>
<div style="left:400.5px;top:346.9px;width:65px;height:16px;background:#484848;"></div>
<div style="left:407.5px;top:348.7px;height:15px;line-height:15px;font-size:11px;white-space:pre;color:#dcdcdc;letter-spacing:1px;font-weight:300;">正常</div>
<svg style="left:456px;top:351.9px;" width="9" height="6" viewBox="0 0 9 6"><path d="M1 1 L4.5 5 L8 1" fill="none" stroke="#e8e8e8" stroke-width="1.3"/></svg>
<div style="left:165.5px;top:366.1px;width:300px;height:20px;background:#656565;"></div>
<div style="left:169.5px;top:366.6px;width:13.5px;height:14.5px;background:#3e3e3e;"></div>
<svg style="left:170.5px;top:370.1px;" width="11" height="8" viewBox="0 0 11 8"><path d="M0.500 4 C3 0.300 8 0.300 10.500 4 C8 7.700 3 7.700 0.500 4 Z" fill="#ececec"/><circle cx="5.500" cy="4" r="2.100" fill="#2e2e2e"/><circle cx="5.500" cy="4" r="0.900" fill="#ececec"/></svg>
<div style="left:199.5px;top:366.6px;width:14px;height:14.5px;background:#444;"></div>
<div style="left:215px;top:366.6px;width:12.5px;height:14.5px;background:#444;"></div>
<svg style="left:238.5px;top:371.1px;" width="6" height="9" viewBox="0 0 6 9"><path d="M1.300 1.200 L4.500 4.500 L1.300 7.800" fill="none" stroke="#e4e4e4" stroke-width="1.300"/></svg>
<div style="left:249.5px;top:366.6px;width:15.5px;height:15px;background:#aeaad0;"></div>
<div style="left:270.5px;top:368.1px;height:17px;line-height:17px;font-size:12px;white-space:pre;color:#f0f0f0;font-family:'Liberation Serif','Noto Serif CJK SC',serif;">4</div>
<svg style="left:299.5px;top:366.1px;" width="17" height="17" viewBox="0 0 17 17"><path d="M2.500 2.500 H11 L15.500 7 V17.500 H2.500 Z" fill="#e6f1fb"/><path d="M11 2.500 L15.500 7 H11 Z" fill="#b4cfe8"/><rect x="0" y="0.500" width="11.500" height="6" rx="1.200" fill="#2d8ceb"/><path d="M2 3.500 H4.500 M5.500 3.500 H7 M8 3.500 H9.500" stroke="#cfe6ff" stroke-width="1.100"/><path d="M5 12 H8 V15 H5 Z M9.500 9.500 H12.500 V12.500 H9.500 Z" fill="#bcd8f2"/></svg>
<div style="left:322px;top:370.4px;height:15px;line-height:15px;font-size:10.8px;white-space:pre;color:#f4f4f4;font-family:'Liberation Mono','Noto Serif CJK SC',monospace;letter-spacing:-0.550px;">01.jpg</div>
<div style="left:400.5px;top:366.6px;width:65px;height:16px;background:#484848;"></div>
<div style="left:407.5px;top:368.4px;height:15px;line-height:15px;font-size:11px;white-space:pre;color:#dcdcdc;letter-spacing:1px;font-weight:300;">正常</div>
<svg style="left:456px;top:371.6px;" width="9" height="6" viewBox="0 0 9 6"><path d="M1 1 L4.5 5 L8 1" fill="none" stroke="#e8e8e8" stroke-width="1.3"/></svg>
<svg style="left:469px;top:289px;" width="11" height="15" viewBox="0 0 11 15"><path d="M0.500 0.500 H10.500 V10 L5.500 14.500 L0.500 10 Z" fill="#c6c6c6"/></svg>
<svg style="left:466.5px;top:309px;" width="15" height="13" viewBox="0 0 15 13"><path d="M4 1 L8 1 L8 3 L14 3 L14 9 L8 9 L8 11 L4 11 Z" fill="#d8d8d8"/><circle cx="4.500" cy="8" r="3.400" fill="#4b4b4b" stroke="#d8d8d8" stroke-width="1.300"/></svg>
<div style="left:165.5px;top:428px;width:316px;height:1px;background:#3c3c3c;"></div>
<svg style="left:173.5px;top:431px;" width="12" height="12" viewBox="0 0 12 12"><rect x="0.600" y="0.600" width="7" height="7" fill="none" stroke="#d4d4d4" stroke-width="1.100"/><rect x="3.200" y="3.200" width="7.600" height="7.600" fill="#4b4b4b" stroke="#d4d4d4" stroke-width="1.100"/><rect x="6" y="6" width="2" height="2" fill="#d4d4d4"/></svg>
<div style="left:189px;top:428.5px;width:15.5px;height:16px;background:#404040;"></div>
<svg style="left:192px;top:430.5px;" width="12" height="12" viewBox="0 0 12 12"><circle cx="4.500" cy="4.500" r="3.800" fill="none" stroke="#4ab4f0" stroke-width="1.300"/><rect x="5" y="5" width="6" height="6" fill="none" stroke="#4ab4f0" stroke-width="1.300"/></svg>
<svg style="left:210.5px;top:431px;" width="12" height="11" viewBox="0 0 12 11"><path d="M4.500 0.500 C3 0.500 4 4.500 1.300 5.500 C4 6.500 3 10.500 4.500 10.500 Z M7.500 0.500 C9 0.500 8 4.500 10.700 5.500 C8 6.500 9 10.500 7.500 10.500 Z" fill="#d4d4d4"/></svg>
<svg style="left:229.5px;top:431.5px;" width="14" height="10" viewBox="0 0 14 10"><ellipse cx="5" cy="4.500" rx="4.200" ry="3.800" fill="#d4d4d4"/><rect x="0.500" y="7.800" width="10.500" height="1.600" fill="#d4d4d4"/><path d="M10 1.500 L11 4.500 M13 1 L11.800 5 M10 6.500 L11.800 5" stroke="#d4d4d4" stroke-width="1" fill="none"/></svg>
<div style="left:251.5px;top:428px;height:17px;line-height:17px;font-size:12px;white-space:pre;color:#bcbcbc;letter-spacing:1.100px;">帧渲染时间</div>
<div style="left:325px;top:428.5px;height:16px;line-height:16px;font-size:11.5px;white-space:pre;color:#4fd0a0;letter-spacing:0.900px;">20毫秒</div>
<div style="left:399px;top:429.5px;width:66.5px;height:15.5px;background:#474747;border:1px solid #585858;"></div>
<div style="left:440px;top:429px;height:16px;line-height:16px;font-size:11.5px;white-space:pre;color:#9a9a9a;letter-spacing:0.700px;">切换</div>
<div style="left:486.5px;top:223.5px;width:206.5px;height:221.5px;background:#4b4b4b;"></div>
<div style="left:499px;top:229.5px;height:18px;line-height:18px;font-size:12.5px;white-space:pre;color:#dcdcdc;letter-spacing:0.800px;">效果和预设</div>
<div style="left:578px;top:235.5px;width:9px;height:1px;background:#b8b8b8;"></div>
<div style="left:578px;top:238.5px;width:9px;height:1px;background:#b8b8b8;"></div>
<div style="left:578px;top:241.5px;width:9px;height:1px;background:#b8b8b8;"></div>
<div style="left:491.5px;top:254.5px;width:196.5px;height:18px;background:#414141;border:1px solid #585858;border-radius:3px;"></div>
<svg style="left:498px;top:257.5px;" width="16" height="12" viewBox="0 0 16 12"><circle cx="6.5" cy="4.5" r="3.4" fill="none" stroke="#3da0e6" stroke-width="1.3"/><path d="M4.3 7.3 L1 11" stroke="#3da0e6" stroke-width="1.4"/><path d="M10.5 8 H15.5 L13 10.8 Z" fill="#3da0e6"/></svg>
<div style="left:519px;top:255.5px;height:16px;line-height:16px;font-size:11.5px;white-space:pre;color:#dcdcdc;letter-spacing:0.500px;">三色调</div>
<div style="left:560px;top:259px;width:58px;height:9px;background:#474747;"></div>
<svg style="left:676px;top:259.5px;" width="9" height="9" viewBox="0 0 9 9"><path d="M1 1 L8 8 M8 1 L1 8" stroke="#e0e0e0" stroke-width="1.500"/></svg>
<div style="left:486.5px;top:275.2px;width:205.5px;height:1.3px;background:#1c1c1c;"></div>
<div style="left:486.5px;top:276.5px;width:189.5px;height:16px;background:#595959;"></div>
<svg style="left:491.5px;top:282.25px;" width="8" height="5.5" viewBox="0 0 8 5.5"><path d="M1 1 L4 4.5 L7 1" fill="none" stroke="#d0d0d0" stroke-width="1.2"/></svg>
<div style="left:501.5px;top:277.5px;height:15px;line-height:15px;font-size:10.5px;white-space:pre;color:#d0d0d0;letter-spacing:0.200px;">颜色校正</div>
<div style="left:486.5px;top:292.5px;width:189.5px;height:1px;background:#525252;"></div>
<div style="left:486.5px;top:293.5px;width:189.5px;height:15.5px;background:#595959;"></div>
<div style="left:519.5px;top:297px;width:12px;height:10.5px;background:#c8c8c8;border-radius:1.500px;"></div>
<div style="left:521.5px;top:295.5px;width:2px;height:2px;background:#c8c8c8;"></div>
<div style="left:527.5px;top:295.5px;width:2px;height:2px;background:#c8c8c8;"></div>
<div style="left:520px;top:297.5px;height:10px;line-height:10px;font-size:9px;white-space:pre;color:#3a3a3a;letter-spacing:-0.500px;font-weight:bold;">32</div>
<div style="left:538px;top:297px;width:12px;height:10.5px;background:#c8c8c8;border-radius:1.500px;"></div>
<div style="left:540px;top:295.5px;width:2px;height:2px;background:#c8c8c8;"></div>
<div style="left:546px;top:295.5px;width:2px;height:2px;background:#c8c8c8;"></div>
<svg style="left:540px;top:299px;" width="9" height="7" viewBox="0 0 9 7"><rect x="0" y="0.500" width="4.500" height="1.200" fill="#3a3a3a"/><rect x="0" y="2.900" width="3" height="1.200" fill="#3a3a3a"/><rect x="0" y="5.300" width="4.500" height="1.200" fill="#3a3a3a"/><path d="M5 1 L8.500 3.500 L5 6 Z" fill="#3a3a3a"/></svg>
<div style="left:557px;top:294px;height:15px;line-height:15px;font-size:10.5px;white-space:pre;color:#d0d0d0;letter-spacing:0.200px;">三色调</div>
<div style="left:486.5px;top:428px;width:189.5px;height:1px;background:#3a3a3a;"></div>
<svg style="left:657px;top:430.5px;" width="13" height="13" viewBox="0 0 13 13"><path d="M3 0.500 H12.500 V12.500 H9 V4 H0.500 V3 Z" fill="#c8c8c8"/><path d="M2 5.500 H8 V11.500 Z" fill="#c8c8c8"/></svg>
</div>
<div id="wm"><span style="left:472.0px;font-size:25px;top:-1.5px">技</span><span style="left:501.0px;font-size:25px;top:-1.5px">艺</span><span style="left:525.7px;font-size:29px">C</span><span style="left:553.0px;font-size:29px">G</span><span style="left:611.5px;font-size:29px">w</span><span style="left:640.0px;font-size:29px">w</span><span style="left:668.5px;font-size:29px">w</span><span style="left:689.0px;font-size:29px">.</span><span style="left:719.0px;font-size:29px">q</span><span style="left:748.5px;font-size:29px">d</span><span style="left:774.8px;font-size:29px">n</span><span style="left:803.5px;font-size:29px">x</span><span style="left:831.5px;font-size:29px">x</span><span style="left:856.7px;font-size:29px">f</span><span style="left:888.5px;font-size:29px">b</span><span style="left:913.5px;font-size:29px">.</span><span style="left:943.8px;font-size:29px">c</span><span style="left:970.8px;font-size:29px">n</span></div>
<div id="rule"></div>
</body>
</html>
